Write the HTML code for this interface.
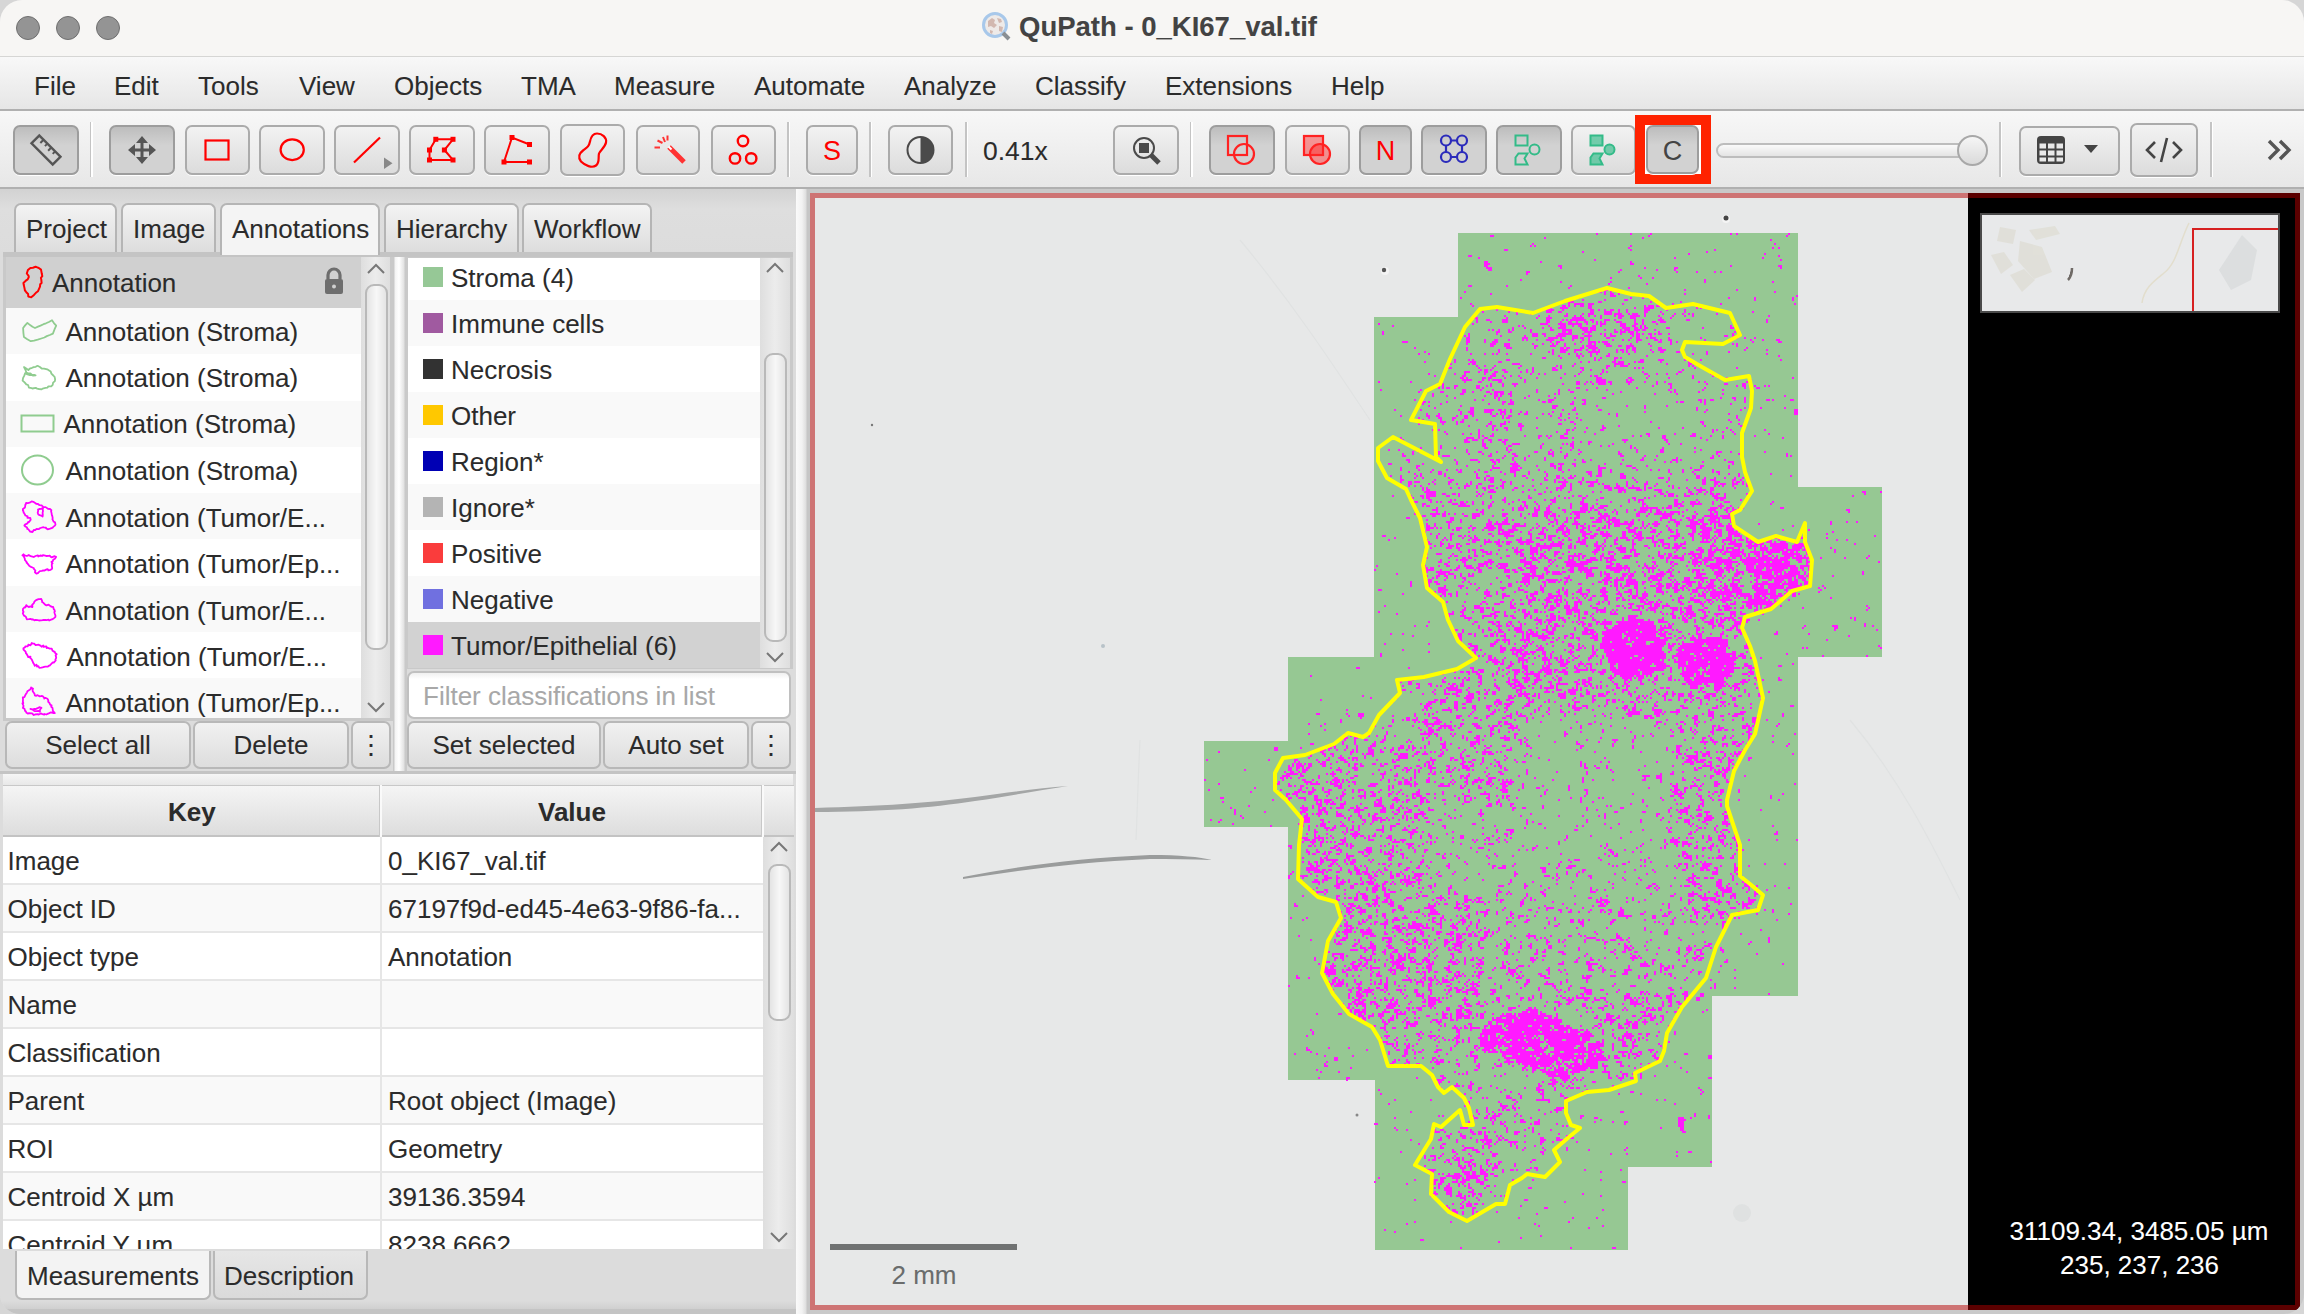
<!DOCTYPE html>
<html><head><meta charset="utf-8">
<style>
*{margin:0;padding:0;box-sizing:border-box}
html,body{width:2304px;height:1314px;overflow:hidden;background:#d6d6d6;font-family:"Liberation Sans",sans-serif;color:#333}
.a{position:absolute}
.t{position:absolute;font-size:26px;line-height:29px;white-space:nowrap;color:#2b2b2b;-webkit-text-stroke:0.08px currentColor}
#win{position:absolute;left:0;top:0;width:2304px;height:1314px;border-radius:22px 22px 20px 20px;overflow:hidden;background:#dcdcdc}
#title{left:0;top:0;width:2304px;height:57px;background:#f7f6f4;border-bottom:1px solid #d6d6d4}
#menu{left:0;top:57px;width:2304px;height:54px;background:linear-gradient(#f8f8f8,#e6e6e6);border-bottom:2px solid #b0b0b0}
#tool{left:0;top:111px;width:2304px;height:78px;background:linear-gradient(#f7f7f7,#e7e7e7);border-bottom:2px solid #b0b0b0}
.tl{width:24px;height:24px;border-radius:50%;background:#949494;border:1px solid #6f6f6f;top:16px}
.btn{position:absolute;top:125px;height:50px;border:2px solid #ababab;border-radius:7px;background:linear-gradient(#f2f2f2,#dcdcdc);box-shadow:0 1px 0 #fff}
.btn.s{background:linear-gradient(#bdbdbd,#d2d2d2 40%,#d2d2d2);border-color:#9d9d9d}
.sep{position:absolute;top:122px;width:3px;height:55px;background:linear-gradient(90deg,#c4c4c4 0,#c4c4c4 1.5px,#fff 1.5px,#fff 3px)}

.tab{position:absolute;top:203px;height:51px;border:2px solid #b5b5b5;border-bottom:none;border-radius:7px 7px 0 0;background:linear-gradient(#f3f3f3,#dcdcdc)}
.tab.sel{background:#f4f4f4;height:52px}
.row{position:absolute;height:47px}
.sq{position:absolute;width:20px;height:20px}
.pbtn{position:absolute;top:721px;height:48px;border:2px solid #b8b8b8;border-radius:7px;background:linear-gradient(#f1f1f1,#dddddd);text-align:center;font-size:26px;line-height:45.5px;color:#2b2b2b;-webkit-text-stroke:0.08px currentColor}
.vsb{position:absolute;background:linear-gradient(90deg,#dedede,#ececec 50%,#dedede)}
.thumb{position:absolute;border:2px solid #b9b9b9;border-radius:9px;background:linear-gradient(90deg,#e4e4e4,#f7f7f7 50%,#e4e4e4)}
.tr{position:absolute;left:0;width:760px;height:48px;border-bottom:2px solid #e6e6e6}
.tr .k{position:absolute;left:4.5px;top:9.5px}
.tr .v{position:absolute;left:385px;top:9.5px}
.btn svg{position:absolute;left:0;top:0}
</style></head><body>
<div id="win">
<!-- title bar -->
<div id="title" class="a">
  <div class="a tl" style="left:16px"></div>
  <div class="a tl" style="left:56px"></div>
  <div class="a tl" style="left:96px"></div>
  <svg class="a" style="left:981px;top:11px" width="32" height="32" viewBox="0 0 32 32">
    <circle cx="14" cy="14" r="11.5" fill="#eeeae8" stroke="#a8c8ea" stroke-width="3"/>
    <path d="M7 10l4-3 3 2-1 3 3 2-3 3-3-2-3 1z M16 7l4 1 1 3-3 1z M18 15l4 1-1 5-3-1z M9 19l3 1-1 3-2-1z" fill="#d2b8b0"/>
    <path d="M22 22l6 6" stroke="#8a8f94" stroke-width="4" stroke-linecap="butt"/>
  </svg>
  <div class="t" style="left:1019px;top:12px;font-size:27.5px;font-weight:bold;color:#434343">QuPath - 0_KI67_val.tif</div>
</div>
<!-- menu bar -->
<div id="menu" class="a">
  <div class="t" style="left:34px;top:14.5px">File</div>
  <div class="t" style="left:114px;top:14.5px">Edit</div>
  <div class="t" style="left:198px;top:14.5px">Tools</div>
  <div class="t" style="left:299px;top:14.5px">View</div>
  <div class="t" style="left:394px;top:14.5px">Objects</div>
  <div class="t" style="left:521px;top:14.5px">TMA</div>
  <div class="t" style="left:614px;top:14.5px">Measure</div>
  <div class="t" style="left:754px;top:14.5px">Automate</div>
  <div class="t" style="left:904px;top:14.5px">Analyze</div>
  <div class="t" style="left:1035px;top:14.5px">Classify</div>
  <div class="t" style="left:1165px;top:14.5px">Extensions</div>
  <div class="t" style="left:1331px;top:14.5px">Help</div>
</div>
<!-- toolbar -->
<div id="tool" class="a"></div>

<!-- toolbar buttons -->
<div class="btn s" style="left:13px;width:66px">
 <svg width="62" height="46" viewBox="0 0 62 46"><g transform="translate(31,23) rotate(45)"><rect x="-15" y="-5.5" width="30" height="11" fill="none" stroke="#555" stroke-width="2.4"/><path d="M-9 -5.5v4.5M-3.5 -5.5v3.5M2 -5.5v4.5M7.5 -5.5v3.5" stroke="#555" stroke-width="2"/></g></svg>
</div>
<div class="sep" style="left:90px"></div>
<div class="btn s" style="left:109px;width:66px">
 <svg width="62" height="46" viewBox="0 0 62 46"><g fill="#555"><rect x="29.5" y="13" width="3" height="20"/><rect x="21" y="21.5" width="20" height="3"/><path d="M31 9l-6 7h12z M31 37l-6-7h12z M17 23l7-6v12z M45 23l-7-6v12z"/></g></svg>
</div>
<div class="btn" style="left:185px;width:65px">
 <svg width="61" height="46" viewBox="0 0 61 46"><rect x="18.5" y="13.5" width="23" height="19" fill="none" stroke="#f00" stroke-width="2.2"/></svg>
</div>
<div class="btn" style="left:259px;width:66px">
 <svg width="62" height="46" viewBox="0 0 62 46"><ellipse cx="31.2" cy="22.7" rx="11.6" ry="10.4" fill="none" stroke="#f00" stroke-width="2.2"/></svg>
</div>
<div class="btn" style="left:334px;width:66px">
 <svg width="62" height="46" viewBox="0 0 62 46"><path d="M18 35.5L44 10.5" stroke="#f00" stroke-width="2.2"/><path d="M48 30.5l8.5 5.7-8.5 5.7z" fill="#888"/></svg>
</div>
<div class="btn" style="left:409px;width:66px">
 <svg width="62" height="46" viewBox="0 0 62 46"><path d="M18.5 33V23l6.3-10.7H42L33.4 23 42 33z" fill="none" stroke="#f00" stroke-width="2"/><g fill="#f00"><rect x="22.3" y="9.8" width="5" height="5"/><rect x="39.5" y="9.8" width="5" height="5"/><rect x="16" y="20.5" width="5" height="5"/><rect x="30.9" y="20.5" width="5" height="5"/><rect x="16" y="30.5" width="5" height="5"/><rect x="39.5" y="30.5" width="5" height="5"/></g></svg>
</div>
<div class="btn" style="left:484px;width:66px">
 <svg width="62" height="46" viewBox="0 0 62 46"><path d="M43.5 17.5L26 10.5 18 35h25.5" fill="none" stroke="#f00" stroke-width="2"/><g fill="#f00"><rect x="23.5" y="8" width="5" height="5"/><rect x="41" y="15" width="5" height="5"/><rect x="15.5" y="32.5" width="5" height="5"/><rect x="41" y="32.5" width="5" height="5"/></g></svg>
</div>
<div class="btn" style="left:560px;width:65px;top:124px;height:52px">
 <svg width="61" height="48" viewBox="0 0 61 48"><path d="M35 7.5c5 0 10 4 9 9-1 5-6 8-7 11-1 4 1 9-3 12-4 3-11 0-15-4-3-4-2-8 2-11 4-3 6-4 7-9 1-5 3-8 7-8z" fill="none" stroke="#f00" stroke-width="2.2"/></svg>
</div>
<div class="btn" style="left:636px;width:64px">
 <svg width="60" height="46" viewBox="0 0 60 46"><g transform="translate(0,3)"><path d="M31 17l15 15" stroke="#f33" stroke-width="5"/><path d="M16.5 17.5h5.5M19.5 10.5l5 2.5M25 7l2 5M29.5 5.5v5" stroke="#f33" stroke-width="2"/><path d="M30.5 16.5l3 3" stroke="#fff" stroke-width="2"/></g></svg>
</div>
<div class="btn" style="left:711px;width:65px">
 <svg width="61" height="46" viewBox="0 0 61 46"><g fill="none" stroke="#f00" stroke-width="2.4"><circle cx="30" cy="14" r="5.2"/><circle cx="22" cy="31.4" r="5.2"/><circle cx="38.2" cy="31.4" r="5.2"/></g></svg>
</div>
<div class="sep" style="left:787px"></div>
<div class="btn" style="left:806px;width:52px">
 <svg width="48" height="46" viewBox="0 0 48 46"><text x="24" y="32.5" text-anchor="middle" font-family="Liberation Sans" font-size="27" fill="#f00">S</text></svg>
</div>
<div class="sep" style="left:869px"></div>
<div class="btn" style="left:888px;width:65px">
 <svg width="61" height="46" viewBox="0 0 61 46"><circle cx="30.5" cy="23" r="13" fill="none" stroke="#4a4a4a" stroke-width="2"/><path d="M30.5 10a13 13 0 0 1 0 26z" fill="#4a4a4a"/></svg>
</div>
<div class="sep" style="left:965px"></div>
<div class="t" style="left:983px;top:137px;font-size:26.5px">0.41x</div>
<div class="btn" style="left:1113px;width:66px">
 <svg width="62" height="46" viewBox="0 0 62 46"><circle cx="29" cy="21" r="10" fill="none" stroke="#4a4a4a" stroke-width="2"/><rect x="24" y="16" width="10" height="10" fill="#4a4a4a"/><path d="M35.5 27.5l8.5 8.5" stroke="#4a4a4a" stroke-width="5"/></svg>
</div>
<div class="sep" style="left:1190px"></div>
<div class="btn s" style="left:1209px;width:66px">
 <svg width="62" height="46" viewBox="0 0 62 46"><rect x="17" y="9" width="19" height="19" fill="none" stroke="#f22" stroke-width="2.2"/><circle cx="33" cy="27" r="10" fill="none" stroke="#f22" stroke-width="2.2"/></svg>
</div>
<div class="btn" style="left:1285px;width:65px">
 <svg width="61" height="46" viewBox="0 0 61 46"><rect x="17" y="9" width="19" height="19" fill="rgba(255,40,40,.45)" stroke="#f22" stroke-width="2.2"/><circle cx="33" cy="27" r="10" fill="rgba(255,40,40,.45)" stroke="#f22" stroke-width="2.2"/></svg>
</div>
<div class="btn s" style="left:1359px;width:53px">
 <svg width="49" height="46" viewBox="0 0 49 46"><text x="24.5" y="33" text-anchor="middle" font-family="Liberation Sans" font-size="27" fill="#f00">N</text></svg>
</div>
<div class="btn s" style="left:1421px;width:66px">
 <svg width="62" height="46" viewBox="0 0 62 46"><g fill="none" stroke="#2b2bbb" stroke-width="2.2"><circle cx="23" cy="13.5" r="5"/><circle cx="39" cy="13.5" r="5"/><circle cx="23" cy="30" r="5"/><circle cx="39" cy="30" r="5"/><path d="M28 13.5h6M28 30h6M23 18.5v6.5M39 18.5v6.5"/></g></svg>
</div>
<div class="btn s" style="left:1496px;width:66px">
 <svg width="62" height="46" viewBox="0 0 62 46"><g fill="none" stroke="#33bb88" stroke-width="2"><rect x="17.5" y="8.5" width="12" height="10"/><circle cx="36.5" cy="22.5" r="5"/><path d="M17.5 37.5v-7l3-4h9l-3 5 3 6z"/></g></svg>
</div>
<div class="btn" style="left:1571px;width:65px">
 <svg width="61" height="46" viewBox="0 0 61 46"><g fill="rgba(51,187,136,.65)" stroke="#33bb88" stroke-width="2"><rect x="17.5" y="8.5" width="12" height="10"/><circle cx="36.5" cy="22.5" r="5"/><path d="M17.5 37.5v-7l3-4h9l-3 5 3 6z"/></g></svg>
</div>
<div class="a" style="left:1635px;top:115px;width:76px;height:69px;border:10px solid #ff2200;background:#fff"></div>
<div class="btn s" style="left:1646px;width:53px;top:125px;height:49px">
 <svg width="49" height="45" viewBox="0 0 49 45"><text x="24.5" y="33" text-anchor="middle" font-family="Liberation Sans" font-size="27" fill="#444">C</text></svg>
</div>
<div class="a" style="left:1716px;top:143px;width:270px;height:15px;border-radius:8px;border:2px solid #bdbdbd;background:linear-gradient(#fafafa,#e4e4e4)"></div>
<div class="a" style="left:1957px;top:135px;width:31px;height:31px;border-radius:50%;border:2px solid #a8a8a8;background:linear-gradient(#f6f6f6,#dadada)"></div>
<div class="sep" style="left:1999px"></div>
<div class="btn" style="left:2019px;width:101px;top:126px;height:50px">
 <svg width="97" height="46" viewBox="0 0 97 46"><rect x="16" y="8" width="28" height="28" rx="4" fill="#444"/><g fill="#e9e9e9"><rect x="18.5" y="15.5" width="6.5" height="5"/><rect x="27" y="15.5" width="6.5" height="5"/><rect x="35.5" y="15.5" width="6.5" height="5"/><rect x="18.5" y="22.5" width="6.5" height="5"/><rect x="27" y="22.5" width="6.5" height="5"/><rect x="35.5" y="22.5" width="6.5" height="5"/><rect x="18.5" y="29.5" width="6.5" height="4"/><rect x="27" y="29.5" width="6.5" height="4"/><rect x="35.5" y="29.5" width="6.5" height="4"/></g><path d="M63 17h14l-7 8z" fill="#444"/></svg>
</div>
<div class="btn" style="left:2130px;width:68px;top:123px;height:54px">
 <svg width="64" height="50" viewBox="0 0 64 50"><path d="M23 17l-8 8 8 8M41 17l8 8-8 8M35 13l-6 24" fill="none" stroke="#444" stroke-width="2.6"/></svg>
</div>
<div class="sep" style="left:2210px"></div>
<svg class="a" style="left:2266px;top:138px" width="30" height="24" viewBox="0 0 30 24"><path d="M3 3l9 9-9 9M14 3l9 9-9 9" fill="none" stroke="#555" stroke-width="3.4"/></svg>


<!-- LEFT PANEL -->
<div class="a" style="left:0;top:189px;width:796px;height:1125px;background:#dcdcdc"></div>
<div class="a" style="left:0;top:189px;width:796px;height:66px;background:linear-gradient(#d2d2d2,#dedede 30%,#dcdcdc)"></div>
<div class="tab" style="left:14px;width:103px"><div class="t" style="left:10px;top:10px">Project</div></div>
<div class="tab" style="left:121px;width:95px"><div class="t" style="left:10px;top:10px">Image</div></div>
<div class="tab" style="left:384px;width:135px"><div class="t" style="left:10px;top:10px">Hierarchy</div></div>
<div class="tab" style="left:522px;width:130px"><div class="t" style="left:10px;top:10px">Workflow</div></div>
<div class="a" style="left:3px;top:252px;width:790px;height:5px;background:#c4c4c4"></div>
<div class="tab sel" style="left:220px;width:160px;border-color:#b5b5b5"><div class="t" style="left:10px;top:10px">Annotations</div></div>
<!-- annotation list -->
<div class="a" style="left:3px;top:257px;width:390px;height:464px;background:#c9c9c9"></div>
<div class="a" style="left:6px;top:257px;width:355px;height:461px;background:#fff;overflow:hidden">
  <div class="row" style="left:0;top:0;width:355px;height:51px;background:#d0d0d0"></div>
  <div class="row" style="left:0;top:51px;width:355px;height:46.3px;background:#f9f9f9"></div>
  <div class="row" style="left:0;top:143.6px;width:355px;height:46.3px;background:#f9f9f9"></div>
  <div class="row" style="left:0;top:236.2px;width:355px;height:46.3px;background:#f9f9f9"></div>
  <div class="row" style="left:0;top:328.8px;width:355px;height:46.3px;background:#f9f9f9"></div>
  <div class="row" style="left:0;top:421.4px;width:355px;height:46.3px;background:#f9f9f9"></div>
</div>
<div class="vsb" style="left:361px;top:257px;width:29px;height:461px"></div>
<svg class="a" style="left:366px;top:262px" width="20" height="14" viewBox="0 0 20 14"><path d="M2 11l8-8 8 8" fill="none" stroke="#777" stroke-width="2"/></svg>
<svg class="a" style="left:366px;top:700px" width="20" height="14" viewBox="0 0 20 14"><path d="M2 3l8 8 8-8" fill="none" stroke="#777" stroke-width="2"/></svg>
<div class="thumb" style="left:365px;top:284px;width:23px;height:366px"></div>
<!-- annotation rows text & icons -->
<svg class="a" style="left:18px;top:262px" width="30" height="42" viewBox="18 262 30 42"><path d="M30.4 267.9 32.9 267.7 35.6 266.8 37.2 267.4 38.8 268.0 41.0 269.6 41.4 271.6 41.7 273.3 42.3 276.2 40.9 277.8 41.3 279.6 41.6 282.9 40.2 284.2 40.0 286.7 38.9 289.1 38.0 291.2 35.9 292.8 34.2 294.7 33.4 295.4 31.2 297.3 30.4 297.1 28.3 296.5 28.1 294.0 26.8 292.8 25.9 291.7 24.9 290.3 24.6 288.6 24.0 285.9 23.8 285.1 23.4 282.9 25.8 280.7 27.7 279.4 28.8 277.0 28.6 275.9 26.8 273.5 27.6 271.0 27.9 270.0z" fill="none" stroke="#f00" stroke-width="2.0" stroke-linejoin="round"/></svg>
<svg class="a" style="left:18px;top:314px" width="42" height="30" viewBox="18 314 42 30"><path d="M23.1 328.0 25.1 325.4 27.4 322.9 30.1 325.1 32.5 326.8 35.0 328.0 38.0 326.7 40.5 325.6 43.5 324.2 46.0 323.3 48.9 322.0 52.0 320.3 53.9 323.1 56.2 325.7 54.4 329.7 52.9 333.6 49.8 335.0 46.8 336.1 44.4 337.5 41.3 338.5 37.7 339.7 34.0 340.6 30.8 341.2 27.3 339.2 23.9 337.0 23.4 332.8z" fill="none" stroke="#8fcc8f" stroke-width="1.8" stroke-linejoin="round"/></svg>
<svg class="a" style="left:18px;top:360px" width="42" height="34" viewBox="18 360 42 34"><path d="M24.0 367.1 28.4 370.1 29.7 368.7 32.1 367.8 33.7 367.1 35.7 366.8 37.5 365.8 39.9 367.0 42.0 368.7 44.1 368.6 47.2 369.3 48.7 370.2 50.7 371.5 51.4 373.6 53.3 375.5 54.6 376.9 55.1 379.3 54.9 381.1 53.1 382.6 52.7 384.8 51.2 386.4 48.4 386.4 47.4 387.6 45.5 387.9 42.6 388.6 41.7 389.3 39.0 389.0 37.1 388.6 35.7 387.8 32.4 388.5 31.6 388.1 28.9 387.6 28.1 385.0 26.3 384.4 24.6 382.4 22.6 380.6 23.1 377.9 24.2 375.9 25.1 373.2 27.5 374.5 29.8 375.1 32.0 375.0 33.1 375.6 35.6 375.3 34.3 374.9 32.0 374.8 30.4 373.3 28.0 373.3 26.4 372.5 25.3 369.5z" fill="none" stroke="#8fcc8f" stroke-width="1.8" stroke-linejoin="round"/></svg>
<svg class="a" style="left:20px;top:414px" width="36" height="20" viewBox="0 0 36 20"><rect x="1.5" y="1.5" width="32" height="16" fill="none" stroke="#8fcc8f" stroke-width="2"/></svg>
<svg class="a" style="left:20px;top:454px" width="36" height="32" viewBox="0 0 36 32"><ellipse cx="17.5" cy="16" rx="15.5" ry="14.5" fill="none" stroke="#8fcc8f" stroke-width="2"/></svg>
<svg class="a" style="left:18px;top:495px" width="42" height="45" viewBox="18 495 42 45"><path d="M22.9 510.5 22.9 508.9 25.0 507.4 25.4 504.4 25.7 504.4 26.1 503.0 27.9 503.1 29.6 502.7 31.6 501.5 31.7 501.3 33.3 501.8 36.3 503.8 36.1 503.8 38.0 504.0 39.5 505.2 41.4 505.3 42.1 505.8 43.3 506.9 45.8 507.2 46.0 507.4 47.9 508.8 50.0 509.0 51.4 510.1 51.1 511.2 51.6 513.4 51.8 515.0 52.2 515.7 52.7 518.1 52.4 519.2 53.6 521.6 55.0 522.3 55.5 524.6 54.9 525.6 53.2 526.9 52.8 527.7 51.6 528.1 50.1 528.6 47.6 529.3 46.0 528.2 46.0 527.6 43.3 527.4 43.4 527.2 40.4 528.0 39.3 528.6 39.0 529.1 38.1 529.2 36.6 528.8 35.2 530.2 33.8 530.0 32.5 532.0 30.0 531.5 29.9 531.3 28.3 529.2 27.2 528.9 27.1 527.5 25.4 526.5 24.4 525.5 24.9 524.6 27.5 523.4 28.1 522.0 29.1 522.0 30.1 520.6 30.7 519.8 30.2 517.8 27.4 517.8 27.6 516.3 25.4 515.5 24.3 513.4 23.7 512.7 23.2 510.7zM38.0 509.6 39.3 509.0 41.2 508.9 43.1 507.9 42.7 509.1 43.0 511.1 42.6 512.7 42.8 514.8 42.6 516.6 41.2 515.6 39.5 515.2 38.2 514.3 37.7 512.8 38.2 510.6z" fill="none" stroke="#f0f" stroke-width="1.8" stroke-linejoin="round"/></svg>
<svg class="a" style="left:18px;top:544px" width="42" height="40" viewBox="18 544 42 40"><path d="M22.4 555.4 23.5 554.3 24.6 555.4 26.9 556.0 28.8 555.0 29.1 555.2 30.6 556.2 33.4 556.8 33.8 557.0 35.5 556.0 37.9 555.3 38.3 556.5 40.3 555.5 42.4 555.9 43.0 555.1 45.2 555.6 46.2 556.0 49.0 555.9 49.7 555.6 50.6 556.8 51.7 557.4 54.6 556.2 56.1 556.9 54.9 558.7 53.2 559.7 52.9 561.0 51.4 562.0 52.6 563.4 51.8 564.0 51.8 566.0 52.2 568.2 51.9 568.9 50.6 569.8 48.3 570.4 47.7 569.2 46.7 569.4 44.2 570.6 43.2 570.4 41.9 570.9 39.9 571.1 38.0 572.8 37.9 573.2 36.4 573.6 34.9 572.3 35.4 570.4 34.1 569.4 33.9 568.3 31.9 567.3 31.0 566.9 29.4 566.0 27.8 563.9 26.5 562.6 27.0 562.5 25.2 560.2 24.9 560.0 24.8 558.7 23.7 556.4 22.6 555.2z" fill="none" stroke="#f0f" stroke-width="1.8" stroke-linejoin="round"/></svg>
<svg class="a" style="left:18px;top:590px" width="42" height="40" viewBox="18 590 42 40"><path d="M22.9 610.7 23.0 608.8 24.7 607.1 25.4 607.4 26.3 605.1 27.1 605.9 28.8 607.1 30.4 606.3 32.3 607.1 32.5 606.2 32.1 604.9 33.9 603.1 34.3 601.8 35.0 601.0 36.1 600.1 38.5 599.1 39.6 599.2 41.3 599.0 42.2 601.2 42.0 602.0 43.4 602.8 45.4 604.9 46.5 605.4 48.6 604.7 50.4 606.1 52.0 606.9 53.1 606.8 53.8 609.3 54.5 609.9 54.9 611.4 54.3 612.1 54.8 613.8 55.5 615.8 55.3 617.1 53.7 618.4 52.3 619.3 51.7 619.4 49.2 620.5 48.7 619.7 46.6 620.2 45.5 619.8 43.0 620.0 42.9 620.1 40.9 620.4 39.0 620.5 37.8 620.2 35.7 619.9 34.4 620.3 32.7 619.2 31.9 619.7 30.9 618.8 28.8 619.2 26.8 619.3 25.9 616.9 25.0 616.1 24.0 615.6 22.8 613.3 23.6 611.9z" fill="none" stroke="#f0f" stroke-width="1.8" stroke-linejoin="round"/></svg>
<svg class="a" style="left:18px;top:638px" width="42" height="40" viewBox="18 638 42 40"><path d="M23.4 648.2 25.1 647.2 25.3 646.4 27.8 646.3 28.4 644.6 30.5 645.4 31.8 643.0 32.4 643.5 34.2 643.7 35.6 645.2 38.7 644.7 40.4 645.6 41.6 646.7 43.3 645.5 43.7 646.9 46.3 646.4 46.7 648.1 47.8 647.7 49.7 648.6 51.8 648.7 52.5 650.7 53.7 651.4 54.9 652.1 55.0 652.9 56.7 654.3 55.6 655.2 56.2 657.4 56.0 658.4 55.4 659.4 55.7 660.5 53.8 662.7 52.8 662.4 50.6 664.6 49.9 665.6 48.9 665.7 47.6 666.7 45.2 666.6 43.3 667.1 43.5 667.1 41.4 667.7 39.3 667.9 38.4 666.2 37.0 666.5 36.5 664.7 34.7 665.7 33.8 663.7 33.2 662.9 32.7 661.6 31.7 659.3 30.2 657.9 30.5 656.7 28.2 657.0 27.6 655.7 26.5 653.8 25.9 653.3 25.7 651.9 25.1 651.2 23.5 649.6z" fill="none" stroke="#f0f" stroke-width="1.8" stroke-linejoin="round"/></svg>
<svg class="a" style="left:18px;top:684px" width="42" height="40" viewBox="18 684 42 40"><path d="M22.8 697.5 24.4 697.2 25.2 695.3 25.6 694.6 26.8 692.7 27.0 692.3 27.4 691.2 29.7 689.8 30.7 689.0 31.1 687.4 33.1 688.7 32.6 689.7 32.7 691.2 34.5 693.7 34.9 695.5 36.0 695.8 37.5 695.2 39.8 696.4 41.4 696.0 42.6 696.2 44.3 697.9 44.2 698.6 45.3 697.8 47.4 698.8 48.3 700.2 48.2 701.8 49.3 702.7 50.2 704.7 51.6 705.4 51.2 706.8 52.5 707.9 52.9 710.9 54.8 713.0 53.7 713.2 51.0 712.3 49.3 713.1 48.1 713.6 46.3 714.5 44.6 714.0 44.2 714.7 41.7 713.8 41.1 713.5 38.4 714.6 37.6 714.1 35.2 714.3 34.9 714.6 33.7 715.0 32.1 713.4 29.1 713.2 28.0 713.6 26.5 712.8 25.7 711.2 25.1 711.0 24.5 708.8 22.9 707.9 23.1 707.2 23.6 706.0 22.4 703.3 23.3 703.1 22.9 701.7 23.0 699.2zM30.4 709.0 32.4 709.7 34.3 708.8 35.5 709.1 37.1 708.4 38.2 707.9 39.4 707.2 41.5 707.8 40.7 708.7 39.9 710.2 39.9 711.8 38.6 711.0 36.4 711.1 35.0 711.1 34.1 710.8 32.4 709.4z" fill="none" stroke="#f0f" stroke-width="1.8" stroke-linejoin="round"/></svg>
<svg class="a" style="left:320px;top:267px" width="28" height="30" viewBox="0 0 28 30"><path d="M8 12V8a6 6 0 0 1 12 0v4" fill="none" stroke="#6e6e6e" stroke-width="3.2"/><rect x="5" y="12" width="18" height="15" rx="2" fill="#6e6e6e"/><circle cx="14" cy="19.5" r="2" fill="#d0d0d0"/></svg>
<div class="t" style="left:52px;top:269px">Annotation</div>
<div class="t" style="left:65.5px;top:317.5px">Annotation (Stroma)</div>
<div class="t" style="left:65.5px;top:363.5px">Annotation (Stroma)</div>
<div class="t" style="left:63.5px;top:409.5px">Annotation (Stroma)</div>
<div class="t" style="left:65.5px;top:456.5px">Annotation (Stroma)</div>
<div class="t" style="left:65.5px;top:503.5px">Annotation (Tumor/E...</div>
<div class="t" style="left:65.5px;top:549.5px">Annotation (Tumor/Ep...</div>
<div class="t" style="left:65.5px;top:596.5px">Annotation (Tumor/E...</div>
<div class="t" style="left:66.5px;top:642.5px">Annotation (Tumor/E...</div>
<div class="t" style="left:65.5px;top:688.5px">Annotation (Tumor/Ep...</div>
<!-- divider -->
<div class="a" style="left:393px;top:257px;width:14px;height:516px;background:linear-gradient(90deg,#c9c9c9 0,#c9c9c9 1px,#f3f3f3 2px,#fff 6px,#e2e2e2 11px,#c9c9c9 12px)"></div>
<!-- class list -->
<div class="a" style="left:407px;top:257px;width:386px;height:412px;background:#c9c9c9"></div>
<div class="a" style="left:408px;top:258px;width:352px;height:410px;background:#fff;overflow:hidden">
  <div class="row" style="left:0;top:42px;width:352px;height:46px;background:#f9f9f9"></div>
  <div class="row" style="left:0;top:134px;width:352px;height:46px;background:#f9f9f9"></div>
  <div class="row" style="left:0;top:226px;width:352px;height:46px;background:#f9f9f9"></div>
  <div class="row" style="left:0;top:318px;width:352px;height:46px;background:#f9f9f9"></div>
  <div class="row" style="left:0;top:364px;width:352px;height:46px;background:#d2d2d2"></div>
</div>
<div class="vsb" style="left:760px;top:258px;width:30px;height:410px"></div>
<svg class="a" style="left:765px;top:261px" width="20" height="14" viewBox="0 0 20 14"><path d="M2 11l8-8 8 8" fill="none" stroke="#777" stroke-width="2"/></svg>
<svg class="a" style="left:765px;top:650px" width="20" height="14" viewBox="0 0 20 14"><path d="M2 3l8 8 8-8" fill="none" stroke="#777" stroke-width="2"/></svg>
<div class="thumb" style="left:764px;top:353px;width:23px;height:289px"></div>
<div class="sq" style="left:423px;top:267px;background:#96c896"></div><div class="t" style="left:451px;top:263.5px">Stroma (4)</div>
<div class="sq" style="left:423px;top:313px;background:#a05aa0"></div><div class="t" style="left:451px;top:309.5px">Immune cells</div>
<div class="sq" style="left:423px;top:359px;background:#323232"></div><div class="t" style="left:451px;top:355.5px">Necrosis</div>
<div class="sq" style="left:423px;top:405px;background:#ffc800"></div><div class="t" style="left:451px;top:401.5px">Other</div>
<div class="sq" style="left:423px;top:451px;background:#0000b4"></div><div class="t" style="left:451px;top:447.5px">Region*</div>
<div class="sq" style="left:423px;top:497px;background:#b4b4b4"></div><div class="t" style="left:451px;top:493.5px">Ignore*</div>
<div class="sq" style="left:423px;top:543px;background:#fa3c3c"></div><div class="t" style="left:451px;top:539.5px">Positive</div>
<div class="sq" style="left:423px;top:589px;background:#7070e0"></div><div class="t" style="left:451px;top:585.5px">Negative</div>
<div class="sq" style="left:423px;top:635px;background:#ff1aff"></div><div class="t" style="left:451px;top:631.5px">Tumor/Epithelial (6)</div>
<!-- filter field -->
<div class="a" style="left:407px;top:671px;width:384px;height:48px;border:2px solid #c0c0c0;border-radius:7px;background:linear-gradient(#f0f0f0,#fff 6px)"></div>
<div class="t" style="left:423px;top:682px;color:#a8a8a8">Filter classifications in list</div>
<!-- buttons -->
<div class="pbtn" style="left:5px;width:186px">Select all</div>
<div class="pbtn" style="left:193px;width:156px">Delete</div>
<div class="pbtn" style="left:351px;width:40px">&#8942;</div>
<div class="pbtn" style="left:407px;width:194px">Set selected</div>
<div class="pbtn" style="left:603px;width:146px">Auto set</div>
<div class="pbtn" style="left:751px;width:40px">&#8942;</div>
<div class="a" style="left:0;top:771px;width:796px;height:3px;background:#c4c4c4"></div>
<div class="a" style="left:3px;top:774px;width:790px;height:11px;background:linear-gradient(#f6f6f6,#e8e8e8)"></div>
<!-- table -->
<div class="a" style="left:3px;top:785px;width:791px;height:464px;background:#fff;overflow:hidden">
  <div class="a" style="left:0;top:0;width:791px;height:52px;background:linear-gradient(#f5f5f5,#dddddd);border-top:1px solid #c8c8c8;border-bottom:2px solid #c3c3c3"></div>
  <div class="a" style="left:376px;top:0;width:3px;height:52px;background:linear-gradient(90deg,#c8c8c8 1px,#fafafa 1px)"></div>
  <div class="a" style="left:758px;top:0;width:3px;height:52px;background:linear-gradient(90deg,#c8c8c8 1px,#fafafa 1px)"></div>
  <div class="t" style="left:165px;top:12.5px;font-weight:bold">Key</div>
  <div class="t" style="left:535px;top:12.5px;font-weight:bold">Value</div>
  <div class="tr" style="top:52px;background:#fff"><div class="t k">Image</div><div class="t v">0_KI67_val.tif</div></div>
  <div class="tr" style="top:100px;background:#f9f9f9"><div class="t k">Object ID</div><div class="t v">67197f9d-ed45-4e63-9f86-fa...</div></div>
  <div class="tr" style="top:148px;background:#fff"><div class="t k">Object type</div><div class="t v">Annotation</div></div>
  <div class="tr" style="top:196px;background:#f9f9f9"><div class="t k">Name</div><div class="t v"></div></div>
  <div class="tr" style="top:244px;background:#fff"><div class="t k">Classification</div><div class="t v"></div></div>
  <div class="tr" style="top:292px;background:#f9f9f9"><div class="t k">Parent</div><div class="t v">Root object (Image)</div></div>
  <div class="tr" style="top:340px;background:#fff"><div class="t k">ROI</div><div class="t v">Geometry</div></div>
  <div class="tr" style="top:388px;background:#f9f9f9"><div class="t k">Centroid X &#181;m</div><div class="t v">39136.3594</div></div>
  <div class="tr" style="top:436px;background:#fff"><div class="t k">Centroid Y &#181;m</div><div class="t v">8238.6662</div></div>
  <div class="a" style="left:377px;top:52px;width:2px;height:420px;background:#e6e6e6"></div>
  <div class="vsb" style="left:760px;top:52px;width:31px;height:420px"></div>
</div>
<svg class="a" style="left:769px;top:840px" width="20" height="14" viewBox="0 0 20 14"><path d="M2 11l8-8 8 8" fill="none" stroke="#777" stroke-width="2"/></svg>
<svg class="a" style="left:769px;top:1230px" width="20" height="14" viewBox="0 0 20 14"><path d="M2 3l8 8 8-8" fill="none" stroke="#777" stroke-width="2"/></svg>
<div class="thumb" style="left:768px;top:864px;width:23px;height:157px"></div>
<!-- bottom tabs -->
<div class="a" style="left:0;top:1249px;width:796px;height:65px;background:linear-gradient(#dcdcdc 80%,#d0d0d0 92%,#c4c4c4 92%)"></div>
<div class="a" style="left:15px;top:1251px;width:196px;height:49px;border:2px solid #b8b8b8;border-top:none;border-radius:0 0 7px 7px;background:#f3f3f3"><div class="t" style="left:10px;top:11px">Measurements</div></div>
<div class="a" style="left:213px;top:1251px;width:155px;height:49px;border:2px solid #b8b8b8;border-top:none;border-radius:0 0 7px 7px;background:linear-gradient(#e6e6e6,#dadada)"><div class="t" style="left:9px;top:11px">Description</div></div>
<div class="a" style="left:796px;top:189px;width:14px;height:1125px;background:linear-gradient(90deg,#fafafa,#f2f2f2 6px,#dedede 10px,#c6c6c6 11px)"></div>


<!-- VIEWER -->
<div class="a" style="left:810px;top:189px;width:1494px;height:1125px;background:#c9c9c9"></div>
<div class="a" style="left:810px;top:193px;width:1158px;height:1117px;background:#e7e8e8"></div>
<svg class="a" style="left:815px;top:198px" width="1153" height="1106" viewBox="815 198 1153 1106">
 <g fill="#9a9c9c">
  <path d="M815 808 C880 806 930 803 975 797 C1010 792 1040 788 1068 786 C1040 790 1010 796 975 801 C930 808 880 812 815 812z" fill="#a4a6a6"/>
  <path d="M963 877 C1020 866 1080 858 1150 855 C1180 855 1200 857 1212 860 C1190 859 1170 859 1150 859 C1080 862 1020 870 963 879z"/>
 </g>
 <g fill="none" stroke="#e0e2e2" stroke-width="1.2">
  <path d="M1140 740 C1138 780 1137 820 1136 840"/>
  <path d="M1240 240 C1290 300 1330 360 1370 420"/>
  <path d="M1850 720 C1900 780 1930 840 1960 900"/>
 </g>
 <g>
  <circle cx="1385" cy="271" r="4" fill="#f4f4f4"/><circle cx="1384" cy="270" r="2.2" fill="#555"/>
  <circle cx="1726" cy="219" r="4" fill="#f4f4f4"/><circle cx="1726" cy="218" r="2.5" fill="#444"/>
  <circle cx="872" cy="425" r="1.2" fill="#777"/><circle cx="1103" cy="646" r="2" fill="#b8c2c8"/>
  <circle cx="1357" cy="1115" r="1.5" fill="#888"/><circle cx="1742" cy="1213" r="9" fill="#dfe1e1"/>
 </g>
</svg>
<svg class="a" style="left:0;top:0" width="2304" height="1314" viewBox="0 0 2304 1314">
<polygon points="1458,233 1798,233 1798,487 1882,487 1882,657 1798,657 1798,996 1712,996 1712,1167 1628,1167 1628,1250 1375,1250 1375,1080 1288,1080 1288,827 1204,827 1204,741 1288,741 1288,657 1374,657 1374,317 1458,317" fill="#96c893"/>
<path d="M1596 234h2m32 0h2m18 0h2m78 0h2m4 0h2m50 0h2m-300 2h4m154 0h2m136 0h2m-244 2h2m96 0h2m126 2h2m-240 4h2m240 0h2m-246 2h2m2 0h2m94 0h2m-4 2h2m142 0h2m4 0h2m-276 2h4m122 0h2m82 0h2m-134 2h2m122 0h2m-20 2h2m74 0h2m-298 2h4m306 0h2m-302 2h2m194 0h2m86 0h2m-170 2h2m184 0h2m-298 2h4m52 0h2m88 0h2m-148 2h6m140 0h4m-150 2h4m70 0h4m168 0h2m46 0h4m-296 2h6m68 0h2m82 0h2m28 0h4m102 0h2m-294 2h4m128 0h2m34 0h2m16 0h2m-150 2h4m88 0h2m56 0h2m18 0h2m16 0h2m4 0h2m-196 2h2m110 2h2m-30 2h2m28 0h2m10 0h2m-134 2h2m182 0h2m-146 2h2m48 0h2m92 0h2m66 0h2m-166 2h2m36 0h2m-180 2h4m34 0h2m62 0h2m-4 2h2m58 0h2m-26 2h4m76 0h2m50 0h2m-274 2h2m132 0h4m2 0h2m4 0h2m162 0h2m-286 2h2m112 0h2m4 0h4m4 0h2m64 0h2m-76 2h6m22 0h4m2 0h4m148 0h2m-338 2h2m116 0h2m50 0h2m10 0h2m84 0h2m24 0h2m36 0h2m-226 2h4m10 0h2m20 0h2m18 0h4m126 0h2m36 0h2m-226 2h6m24 0h4m48 0h2m4 0h2m22 0h2m-212 2h2m84 0h4m8 0h2m4 0h10m4 0h6m28 0h2m48 0h2m46 0h2m72 0h2m-324 2h2m88 0h4m2 0h2m4 0h2m4 0h4m4 0h4m52 0h2m2 0h6m2 0h4m40 0h2m-204 2h2m46 0h6m8 0h8m20 0h4m42 0h2m8 0h10m42 0h2m2 0h2m-206 2h2m12 0h2m34 0h8m8 0h2m26 0h4m4 0h2m4 0h2m4 0h4m4 0h2m6 0h2m16 0h6m16 0h2m16 0h2m-204 2h2m24 0h2m6 0h2m28 0h6m6 0h4m28 0h4m10 0h8m6 0h2m6 0h2m16 0h4m12 0h2m22 0h2m66 0h2m-238 2h2m12 0h2m34 0h2m14 0h2m4 0h6m10 0h8m2 0h8m6 0h2m2 0h6m6 0h2m16 0h2m10 0h2m6 0h2m4 0h2m2 0h2m22 0h2m-214 2h2m32 0h2m8 0h2m14 0h4m6 0h2m4 0h2m6 0h2m4 0h2m4 0h2m12 0h2m2 0h6m6 0h10m4 0h2m12 0h2m12 0h2m10 0h2m6 0h2m74 0h2m-296 2h4m28 0h2m28 0h2m8 0h6m20 0h12m16 0h2m16 0h4m8 0h6m24 0h2m8 0h2m-196 2h2m8 0h4m12 0h6m38 0h4m12 0h2m2 0h2m2 0h16m4 0h4m10 0h6m4 0h2m18 0h2m6 0h2m14 0h6m22 0h4m76 0h2m-292 2h2m12 0h2m10 0h6m38 0h4m10 0h2m6 0h4m4 0h2m6 0h4m4 0h2m2 0h2m2 0h2m2 0h2m10 0h6m12 0h2m6 0h2m8 0h4m4 0h6m100 0h2m-390 2h2m92 0h2m66 0h8m10 0h8m2 0h14m4 0h2m8 0h2m2 0h6m14 0h6m8 0h4m4 0h2m12 0h2m-266 2h2m124 0h2m2 0h2m24 0h2m10 0h6m6 0h2m4 0h4m10 0h4m4 0h2m18 0h6m6 0h4m4 0h2m2 0h2m84 0h2m-220 2h2m10 0h2m16 0h2m6 0h2m6 0h8m14 0h8m2 0h6m26 0h8m4 0h4m2 0h2m2 0h4m18 0h4m32 0h2m26 0h4m-246 2h2m2 0h2m4 0h2m8 0h2m2 0h2m16 0h2m18 0h4m8 0h10m10 0h6m2 0h6m8 0h2m8 0h2m4 0h2m2 0h6m4 0h6m2 0h4m8 0h2m-274 2h2m112 0h4m8 0h4m18 0h2m30 0h4m2 0h4m12 0h8m22 0h4m2 0h6m2 0h6m2 0h2m20 0h2m74 0h2m-354 2h2m84 0h2m26 0h2m34 0h6m4 0h4m12 0h14m10 0h2m4 0h2m10 0h2m2 0h2m4 0h2m8 0h2m8 0h4m2 0h4m2 0h2m4 0h4m2 0h2m2 0h4m6 0h2m62 0h2m-270 2h2m2 0h2m30 0h2m22 0h2m6 0h6m6 0h2m10 0h10m6 0h6m6 0h8m12 0h2m4 0h6m16 0h2m2 0h4m10 0h2m72 0h4m4 0h6m-272 2h4m52 0h6m20 0h10m2 0h2m10 0h6m2 0h4m4 0h2m16 0h4m20 0h2m4 0h4m6 0h2m2 0h6m12 0h2m30 0h2m34 0h2m6 0h2m8 0h2m-298 2h2m6 0h4m14 0h2m8 0h4m10 0h2m12 0h2m2 0h2m8 0h2m8 0h8m6 0h4m8 0h2m8 0h2m4 0h2m22 0h2m8 0h2m4 0h2m6 0h6m12 0h4m2 0h2m6 0h4m32 0h2m44 0h2m10 0h2m12 0h4m-378 2h6m50 0h2m6 0h4m14 0h2m6 0h6m52 0h2m4 0h4m20 0h2m6 0h8m2 0h2m2 0h6m28 0h2m20 0h4m8 0h2m4 0h2m16 0h2m56 0h2m24 0h4m-316 2h2m22 0h6m8 0h6m22 0h2m8 0h2m8 0h2m2 0h2m6 0h2m8 0h2m12 0h4m2 0h2m8 0h6m20 0h2m16 0h2m20 0h2m44 0h2m14 0h2m2 0h2m-248 2h4m10 0h6m24 0h4m12 0h6m8 0h2m16 0h2m2 0h10m10 0h6m6 0h4m4 0h8m16 0h2m84 0h2m-324 2h2m50 0h2m38 0h6m22 0h2m24 0h4m2 0h4m10 0h4m4 0h10m28 0h4m2 0h4m22 0h4m84 0h2m-282 2h2m30 0h2m52 0h2m6 0h8m6 0h8m4 0h2m4 0h4m2 0h2m16 0h2m2 0h4m2 0h2m4 0h4m14 0h2m6 0h8m78 0h2m20 0h2m-344 2h2m72 0h2m48 0h2m2 0h2m6 0h6m8 0h2m12 0h12m16 0h2m4 0h2m2 0h2m6 0h2m16 0h2m6 0h4m12 0h4m26 0h2m20 0h2m-312 2h2m8 0h2m40 0h2m12 0h2m6 0h2m2 0h2m8 0h2m22 0h2m20 0h2m14 0h2m6 0h2m2 0h2m8 0h2m4 0h2m10 0h2m18 0h2m62 0h2m12 0h2m58 0h2m-210 2h2m16 0h4m2 0h2m6 0h2m14 0h4m36 0h2m130 0h2m-238 2h4m14 0h2m16 0h2m14 0h2m4 0h2m12 0h4m2 0h2m64 0h2m-234 2h2m12 0h2m2 0h2m32 0h4m84 0h2m2 0h2m14 0h2m24 0h4m14 0h6m20 0h2m2 0h2m10 0h2m78 0h2m-358 2h2m22 0h2m4 0h2m14 0h6m22 0h4m78 0h2m6 0h2m22 0h4m2 0h6m10 0h2m2 0h6m16 0h2m26 0h2m-242 2h4m16 0h2m2 0h4m36 0h8m54 0h2m38 0h10m4 0h2m36 0h2m20 0h4m-216 2h2m6 0h2m8 0h2m24 0h2m34 0h2m2 0h2m10 0h2m32 0h4m4 0h2m4 0h8m60 0h2m2 0h2m-246 2h4m26 0h2m12 0h2m24 0h2m12 0h2m18 0h4m4 0h2m18 0h4m22 0h2m26 0h2m2 0h2m2 0h2m50 0h2m40 0h2m-258 2h2m2 0h4m2 0h2m10 0h4m20 0h2m4 0h2m18 0h6m24 0h2m6 0h2m10 0h2m78 0h2m-220 2h6m8 0h2m4 0h4m6 0h4m6 0h4m12 0h2m4 0h2m4 0h2m46 0h2m20 0h2m2 0h2m34 0h2m34 0h4m28 0h2m-284 2h2m24 0h2m8 0h2m18 0h2m6 0h4m34 0h2m6 0h2m4 0h2m18 0h2m12 0h2m20 0h2m42 0h4m8 0h2m8 0h2m8 0h2m32 0h2m-278 2h2m26 0h4m24 0h6m6 0h2m6 0h2m6 0h2m54 0h2m14 0h2m2 0h4m50 0h2m42 0h2m18 0h2m-254 2h4m2 0h2m14 0h4m2 0h4m12 0h2m14 0h2m14 0h2m22 0h2m34 0h6m26 0h4m14 0h2m20 0h2m22 0h2m24 0h6m2 0h2m20 0h2m42 0h2m-332 2h10m10 0h2m4 0h2m2 0h10m22 0h2m70 0h10m20 0h2m2 0h4m90 0h4m20 0h4m-374 2h2m30 0h2m52 0h2m12 0h4m16 0h4m22 0h2m50 0h4m6 0h2m2 0h2m4 0h10m2 0h4m14 0h6m12 0h2m10 0h2m6 0h2m32 0h2m4 0h2m40 0h4m-308 2h2m46 0h2m10 0h2m8 0h6m44 0h2m12 0h4m4 0h2m6 0h2m4 0h8m4 0h2m16 0h2m26 0h2m10 0h4m34 0h2m16 0h4m14 0h4m-310 2h4m2 0h2m10 0h4m18 0h4m6 0h2m2 0h2m10 0h2m10 0h2m136 0h2m16 0h2m64 0h2m4 0h4m8 0h2m8 0h2m2 0h2m-332 2h2m2 0h2m2 0h4m4 0h2m20 0h4m2 0h2m92 0h4m16 0h2m38 0h2m32 0h2m32 0h2m38 0h2m10 0h4m-380 2h2m38 0h2m40 0h4m14 0h2m10 0h2m42 0h2m20 0h2m8 0h2m16 0h2m18 0h2m60 0h2m4 0h2m26 0h2m18 0h2m-306 2h2m20 0h4m18 0h4m6 0h2m12 0h4m4 0h10m6 0h2m24 0h2m20 0h2m10 0h4m46 0h2m48 0h2m2 0h2m22 0h2m-268 2h2m26 0h4m26 0h2m2 0h4m2 0h4m4 0h4m42 0h2m2 0h2m52 0h2m40 0h2m20 0h2m44 0h2m-292 2h2m12 0h2m36 0h2m8 0h4m2 0h2m8 0h2m16 0h2m18 0h2m234 0h2m-332 2h2m38 0h2m2 0h2m24 0h2m28 0h2m18 0h2m26 0h4m114 0h2m10 0h4m8 0h2m-332 2h2m58 0h2m6 0h2m14 0h2m10 0h2m26 0h2m8 0h6m28 0h4m112 0h4m2 0h2m4 0h4m20 0h2m8 0h2m20 0h4m2 0h2m16 0h4m-372 2h4m2 0h2m16 0h2m54 0h4m4 0h4m28 0h4m2 0h4m20 0h2m10 0h2m90 0h2m2 0h4m16 0h2m2 0h2m38 0h2m-324 2h2m16 0h2m46 0h2m12 0h2m4 0h6m56 0h4m8 0h4m118 0h2m24 0h2m-304 2h2m30 0h2m90 0h6m38 0h2m28 0h2m16 0h2m20 0h2m82 0h2m-318 2h2m34 0h4m78 0h4m18 0h2m68 0h2m50 0h2m46 0h2m14 0h2m22 0h2m-392 2h2m18 0h2m4 0h2m36 0h2m10 0h4m10 0h10m4 0h4m2 0h2m4 0h2m50 0h2m8 0h4m22 0h4m94 0h2m8 0h2m32 0h2m52 0h4m-338 2h2m6 0h6m10 0h8m8 0h6m4 0h2m8 0h2m4 0h2m24 0h2m90 0h2m58 0h2m88 0h4m-372 2h2m10 0h2m20 0h2m8 0h4m16 0h2m4 0h2m2 0h2m2 0h2m12 0h2m4 0h4m14 0h2m4 0h2m10 0h2m6 0h2m6 0h2m30 0h2m6 0h2m110 0h2m18 0h2m44 0h4m-398 2h2m24 0h4m6 0h4m16 0h2m6 0h4m4 0h2m18 0h4m6 0h2m4 0h4m38 0h2m8 0h2m54 0h2m118 0h2m-320 2h2m8 0h2m8 0h4m10 0h4m8 0h4m34 0h2m2 0h4m26 0h2m20 0h2m8 0h2m6 0h2m158 0h2m-316 2h2m16 0h2m10 0h2m8 0h2m12 0h2m82 0h2m2 0h2m14 0h2m146 0h2m8 0h2m-318 2h2m16 0h6m10 0h2m2 0h4m26 0h2m12 0h2m2 0h2m60 0h4m76 0h2m48 0h4m26 0h2m-314 2h2m22 0h2m12 0h2m30 0h4m8 0h6m12 0h4m36 0h4m12 0h2m126 0h2m34 0h2m-272 2h2m16 0h2m4 0h4m4 0h2m16 0h6m78 0h2m14 0h2m84 0h2m34 0h6m-312 2h2m56 0h2m10 0h4m12 0h2m14 0h2m36 0h2m10 0h2m14 0h4m52 0h2m22 0h2m42 0h2m-296 2h2m4 0h2m38 0h2m12 0h2m2 0h2m8 0h2m12 0h2m44 0h4m2 0h2m26 0h4m108 0h2m2 0h2m12 0h2m32 0h2m-322 2h2m32 0h2m76 0h2m8 0h2m16 0h2m126 0h2m8 0h2m8 0h2m-288 2h2m14 0h2m6 0h2m6 0h2m12 0h2m70 0h4m26 0h2m50 0h4m24 0h2m16 0h4m38 0h2m32 0h2m-336 2h2m42 0h2m2 0h2m6 0h4m30 0h2m12 0h4m4 0h2m2 0h2m8 0h4m68 0h2m6 0h2m6 0h2m12 0h4m24 0h6m14 0h2m10 0h2m30 0h2m-366 2h4m6 0h2m64 0h8m4 0h2m4 0h4m50 0h2m8 0h2m10 0h8m4 0h2m88 0h4m34 0h2m20 0h2m58 0h2m-382 2h2m60 0h4m4 0h6m4 0h2m4 0h4m6 0h4m2 0h4m114 0h6m36 0h4m38 0h2m-244 2h6m12 0h2m6 0h2m10 0h4m66 0h2m6 0h2m6 0h4m32 0h2m40 0h2m-186 2h4m18 0h2m6 0h8m22 0h2m18 0h2m2 0h2m2 0h4m14 0h2m22 0h2m54 0h2m10 0h2m-274 2h2m30 0h2m40 0h4m22 0h4m28 0h2m28 0h4m26 0h2m6 0h2m20 0h2m-212 2h2m18 0h2m12 0h2m28 0h4m18 0h2m32 0h2m18 0h2m10 0h2m56 0h2m2 0h2m26 0h2m30 0h2m-308 2h2m8 0h2m14 0h6m46 0h2m38 0h2m2 0h2m38 0h2m18 0h2m6 0h2m56 0h2m22 0h4m36 0h2m-290 2h2m4 0h2m18 0h2m26 0h2m10 0h4m14 0h2m10 0h2m24 0h4m10 0h2m2 0h2m6 0h2m18 0h2m36 0h2m16 0h2m22 0h4m30 0h2m20 0h6m8 0h2m32 0h2m-364 2h2m8 0h2m10 0h2m12 0h2m28 0h2m12 0h2m6 0h2m20 0h4m32 0h6m12 0h2m10 0h2m38 0h4m94 0h2m20 0h2m46 0h2m-386 2h4m36 0h8m38 0h4m12 0h2m8 0h4m10 0h2m22 0h2m10 0h4m52 0h4m20 0h2m10 0h2m54 0h2m4 0h2m66 0h2m2 0h2m-290 2h2m8 0h2m10 0h2m18 0h2m18 0h2m76 0h2m32 0h2m32 0h4m-308 2h4m44 0h2m14 0h8m12 0h4m2 0h4m12 0h2m10 0h2m18 0h2m28 0h2m6 0h2m6 0h2m30 0h2m16 0h4m10 0h2m16 0h6m2 0h2m42 0h2m-348 2h2m28 0h2m46 0h2m20 0h2m12 0h4m2 0h2m14 0h2m66 0h4m78 0h2m4 0h2m4 0h2m24 0h2m24 0h6m-346 2h4m30 0h2m32 0h2m36 0h2m14 0h8m32 0h4m4 0h6m8 0h4m28 0h2m14 0h2m110 0h2m-318 2h4m46 0h2m24 0h2m18 0h8m16 0h2m12 0h6m4 0h2m12 0h2m22 0h2m26 0h6m14 0h2m52 0h4m24 0h2m-330 2h2m14 0h2m74 0h8m10 0h8m2 0h2m32 0h2m2 0h4m36 0h8m26 0h4m54 0h2m8 0h2m26 0h2m-330 2h2m16 0h2m12 0h2m12 0h2m8 0h2m2 0h2m16 0h2m10 0h2m18 0h10m18 0h2m18 0h4m6 0h2m28 0h4m8 0h2m24 0h2m12 0h2m6 0h2m8 0h2m12 0h2m10 0h6m12 0h2m-306 2h2m20 0h2m6 0h4m16 0h4m12 0h2m8 0h4m12 0h2m8 0h6m12 0h2m14 0h2m16 0h2m22 0h6m6 0h4m8 0h2m56 0h2m12 0h2m8 0h2m18 0h2m2 0h4m-306 2h2m4 0h2m16 0h4m2 0h2m30 0h2m26 0h2m8 0h2m12 0h2m16 0h2m40 0h4m6 0h4m18 0h4m46 0h2m22 0h2m22 0h2m8 0h2m8 0h2m30 0h2m-382 2h2m8 0h2m14 0h2m2 0h2m22 0h2m30 0h2m8 0h4m24 0h2m6 0h4m20 0h2m8 0h4m10 0h2m2 0h2m14 0h2m4 0h6m18 0h6m70 0h4m38 0h2m50 0h2m-392 2h2m12 0h2m6 0h2m24 0h2m26 0h4m4 0h2m4 0h4m32 0h2m16 0h2m10 0h4m2 0h2m4 0h6m8 0h2m36 0h6m6 0h2m24 0h6m4 0h2m26 0h4m4 0h2m8 0h2m8 0h2m8 0h2m6 0h2m-344 2h4m30 0h2m14 0h4m30 0h2m2 0h6m6 0h2m30 0h2m10 0h4m6 0h2m8 0h2m16 0h2m12 0h2m36 0h2m32 0h2m16 0h2m14 0h4m4 0h6m16 0h4m4 0h2m-342 2h2m6 0h4m2 0h6m12 0h2m14 0h4m18 0h2m18 0h4m8 0h4m4 0h2m42 0h2m2 0h10m10 0h4m4 0h12m28 0h2m8 0h2m8 0h2m18 0h2m34 0h4m8 0h6m12 0h2m2 0h4m2 0h2m4 0h2m-342 2h4m16 0h2m4 0h2m12 0h2m6 0h2m8 0h2m2 0h2m6 0h4m20 0h2m6 0h2m28 0h2m20 0h4m4 0h2m8 0h2m8 0h4m4 0h2m2 0h2m12 0h2m8 0h2m16 0h4m8 0h2m44 0h4m8 0h4m2 0h6m6 0h6m4 0h2m2 0h4m-342 2h2m4 0h2m4 0h2m42 0h6m6 0h2m10 0h6m6 0h4m18 0h2m8 0h2m26 0h6m4 0h2m16 0h6m10 0h6m6 0h4m6 0h2m4 0h2m10 0h2m8 0h2m12 0h2m2 0h2m40 0h2m2 0h2m2 0h2m8 0h2m12 0h2m-326 2h2m2 0h2m22 0h2m6 0h2m4 0h2m10 0h2m4 0h4m2 0h2m6 0h2m4 0h2m10 0h4m28 0h2m8 0h8m6 0h2m32 0h8m2 0h10m4 0h12m4 0h2m2 0h4m20 0h2m4 0h2m6 0h2m6 0h2m4 0h2m8 0h4m20 0h2m-314 2h2m2 0h4m54 0h2m4 0h4m18 0h2m14 0h2m4 0h2m20 0h2m2 0h2m8 0h2m36 0h4m6 0h8m10 0h6m2 0h2m8 0h8m26 0h2m6 0h10m4 0h4m-290 2h12m40 0h2m10 0h8m26 0h2m20 0h2m4 0h2m16 0h2m22 0h2m6 0h2m16 0h4m2 0h2m32 0h4m4 0h2m20 0h4m6 0h4m4 0h2m2 0h2m150 0h4m14 0h2m-456 2h10m6 0h4m6 0h4m2 0h2m18 0h2m2 0h2m54 0h4m118 0h4m4 0h6m10 0h2m4 0h4m2 0h2m6 0h2m4 0h4m2 0h4m4 0h2m20 0h2m116 0h2m-474 2h2m16 0h2m8 0h4m2 0h10m10 0h4m8 0h2m16 0h2m2 0h2m8 0h2m36 0h2m28 0h2m12 0h2m4 0h4m4 0h2m66 0h2m8 0h2m2 0h6m2 0h2m6 0h6m22 0h6m6 0h2m126 0h2m-444 2h4m8 0h2m2 0h4m60 0h2m12 0h2m22 0h4m22 0h2m8 0h2m2 0h2m12 0h4m14 0h4m28 0h4m8 0h2m2 0h2m64 0h12m-298 2h4m18 0h2m2 0h2m46 0h4m12 0h2m24 0h2m4 0h6m26 0h2m12 0h2m30 0h2m4 0h2m2 0h6m30 0h4m18 0h2m18 0h2m2 0h4m16 0h2m-328 2h4m12 0h2m4 0h2m2 0h2m6 0h4m8 0h4m2 0h2m4 0h2m8 0h2m8 0h2m10 0h2m6 0h2m8 0h4m8 0h2m16 0h4m24 0h4m26 0h2m16 0h2m8 0h2m2 0h2m30 0h4m4 0h2m6 0h6m2 0h2m12 0h2m10 0h6m42 0h2m-352 2h4m26 0h6m2 0h6m6 0h2m8 0h2m6 0h2m16 0h2m14 0h2m10 0h2m12 0h2m18 0h2m8 0h8m8 0h2m44 0h4m28 0h8m8 0h12m10 0h2m6 0h2m48 0h2m-350 2h2m2 0h4m12 0h2m14 0h12m18 0h4m28 0h2m2 0h4m10 0h2m8 0h2m20 0h2m10 0h6m4 0h2m6 0h8m12 0h2m20 0h2m2 0h2m20 0h4m2 0h4m2 0h4m8 0h2m24 0h6m6 0h2m10 0h2m-308 2h2m50 0h2m22 0h2m4 0h6m2 0h2m6 0h2m2 0h2m6 0h4m8 0h2m10 0h2m8 0h8m2 0h4m4 0h6m36 0h18m4 0h2m2 0h6m6 0h2m30 0h8m2 0h2m4 0h4m2 0h2m4 0h6m36 0h4m-352 2h6m38 0h2m4 0h2m18 0h2m8 0h2m4 0h6m10 0h6m6 0h4m12 0h4m14 0h8m2 0h2m2 0h4m6 0h2m8 0h2m10 0h2m6 0h2m4 0h8m2 0h2m4 0h4m26 0h2m20 0h8m8 0h4m4 0h8m106 0h4m-414 2h2m6 0h2m34 0h4m50 0h4m6 0h8m12 0h2m6 0h14m2 0h2m8 0h2m12 0h2m2 0h2m8 0h2m10 0h8m4 0h2m4 0h6m2 0h2m4 0h10m2 0h2m10 0h2m14 0h2m2 0h4m8 0h2m2 0h8m110 0h2m-436 2h2m2 0h2m10 0h10m2 0h4m2 0h2m4 0h2m6 0h2m8 0h8m2 0h2m18 0h6m12 0h2m6 0h2m2 0h6m6 0h6m2 0h4m14 0h2m2 0h6m18 0h4m2 0h4m8 0h2m18 0h4m8 0h2m4 0h20m4 0h2m16 0h2m12 0h4m2 0h2m10 0h6m-312 2h4m6 0h4m6 0h4m18 0h4m4 0h8m12 0h2m8 0h4m14 0h2m10 0h6m6 0h4m2 0h6m2 0h2m16 0h4m20 0h10m26 0h4m6 0h2m14 0h10m10 0h2m8 0h4m8 0h14m2 0h12m-326 2h4m40 0h4m18 0h4m30 0h2m16 0h2m20 0h2m6 0h2m10 0h2m2 0h2m2 0h6m10 0h4m4 0h8m2 0h2m2 0h4m44 0h8m2 0h2m14 0h4m2 0h4m6 0h2m6 0h10m2 0h10m-306 2h2m22 0h4m6 0h2m26 0h2m14 0h4m4 0h2m34 0h2m4 0h4m8 0h2m6 0h2m20 0h6m2 0h2m2 0h12m12 0h2m4 0h2m20 0h2m8 0h6m4 0h2m6 0h6m4 0h6m4 0h8m2 0h2m10 0h2m-286 2h6m8 0h2m26 0h4m4 0h2m4 0h6m42 0h4m2 0h2m6 0h4m6 0h4m14 0h10m4 0h4m2 0h8m4 0h4m2 0h4m8 0h2m10 0h4m10 0h2m4 0h6m10 0h8m2 0h4m6 0h10m10 0h2m98 0h2m14 0h2m8 0h2m-438 2h2m4 0h2m6 0h2m12 0h2m36 0h6m2 0h16m4 0h6m4 0h2m10 0h2m10 0h2m6 0h2m4 0h2m8 0h8m4 0h2m22 0h4m2 0h20m8 0h2m4 0h2m2 0h8m16 0h4m10 0h10m2 0h6m2 0h2m2 0h2m2 0h4m6 0h2m28 0h2m70 0h2m-406 2h4m4 0h2m12 0h2m20 0h2m14 0h8m4 0h4m10 0h14m12 0h2m12 0h2m6 0h6m10 0h2m2 0h4m4 0h2m2 0h4m8 0h2m2 0h2m4 0h6m8 0h4m10 0h2m2 0h2m6 0h4m8 0h2m8 0h2m8 0h10m4 0h6m8 0h2m2 0h6m2 0h8m58 0h2m-368 2h8m2 0h2m2 0h2m6 0h2m6 0h6m6 0h2m2 0h4m8 0h12m2 0h4m10 0h4m16 0h2m2 0h2m4 0h4m12 0h6m2 0h2m8 0h2m4 0h4m2 0h2m8 0h2m2 0h4m2 0h2m16 0h4m4 0h4m2 0h2m2 0h2m4 0h2m16 0h2m20 0h6m4 0h12m2 0h2m10 0h8m-312 2h2m2 0h4m22 0h2m2 0h4m12 0h2m8 0h2m4 0h6m4 0h6m4 0h10m12 0h2m10 0h2m2 0h2m8 0h8m2 0h4m10 0h4m4 0h2m6 0h4m28 0h8m16 0h4m12 0h4m4 0h2m14 0h4m6 0h10m4 0h6m4 0h8m2 0h2m44 0h2m24 0h2m-388 2h4m42 0h2m28 0h2m2 0h12m6 0h2m6 0h2m10 0h4m12 0h2m4 0h8m10 0h6m4 0h2m8 0h4m2 0h2m14 0h4m2 0h8m2 0h4m8 0h6m4 0h2m8 0h4m2 0h2m14 0h4m4 0h10m4 0h8m6 0h10m2 0h2m90 0h2m-404 2h2m6 0h2m10 0h4m34 0h4m6 0h12m18 0h4m6 0h8m16 0h4m2 0h2m12 0h8m4 0h4m2 0h10m12 0h4m8 0h8m16 0h2m16 0h4m8 0h6m4 0h2m2 0h8m8 0h4m6 0h12m86 0h2m-446 2h4m50 0h2m12 0h2m6 0h4m2 0h2m2 0h2m4 0h2m16 0h2m10 0h10m16 0h2m12 0h2m2 0h8m8 0h4m14 0h4m4 0h6m6 0h10m10 0h4m6 0h2m2 0h6m10 0h2m2 0h2m12 0h10m10 0h4m6 0h10m4 0h2m2 0h4m6 0h4m2 0h8m4 0h4m50 0h2m72 0h2m-482 2h2m28 0h2m10 0h2m6 0h2m4 0h2m10 0h2m6 0h2m2 0h4m28 0h2m12 0h2m8 0h2m4 0h4m4 0h2m2 0h4m6 0h2m8 0h2m8 0h2m4 0h4m2 0h4m12 0h2m8 0h2m2 0h8m6 0h10m2 0h8m14 0h2m4 0h4m4 0h2m8 0h2m8 0h8m2 0h2m2 0h2m8 0h6m8 0h2m4 0h6m18 0h8m20 0h6m22 0h2m-440 2h2m36 0h2m14 0h2m2 0h2m2 0h2m16 0h2m2 0h8m4 0h2m2 0h2m8 0h2m16 0h6m4 0h6m8 0h4m4 0h4m10 0h2m4 0h4m6 0h2m2 0h4m18 0h2m8 0h4m8 0h4m2 0h2m4 0h4m10 0h2m4 0h6m10 0h2m16 0h2m8 0h2m2 0h2m2 0h2m2 0h2m6 0h10m2 0h2m2 0h6m2 0h2m2 0h2m14 0h6m6 0h2m6 0h2m48 0h2m8 0h2m-422 2h4m10 0h2m30 0h4m8 0h8m2 0h6m2 0h2m2 0h6m6 0h16m18 0h2m4 0h4m14 0h10m10 0h2m6 0h2m8 0h2m16 0h2m18 0h6m2 0h4m20 0h2m14 0h10m4 0h2m6 0h2m6 0h6m10 0h8m2 0h8m2 0h6m2 0h2m4 0h6m8 0h2m-368 2h4m8 0h4m4 0h2m6 0h4m6 0h4m14 0h2m10 0h4m6 0h4m10 0h4m2 0h4m6 0h4m4 0h2m4 0h14m6 0h2m8 0h6m8 0h4m4 0h2m10 0h4m14 0h4m18 0h2m6 0h8m4 0h4m2 0h6m26 0h2m10 0h2m2 0h14m6 0h4m2 0h10m6 0h18m6 0h10m50 0h2m-422 2h2m4 0h2m6 0h6m2 0h2m2 0h2m18 0h2m16 0h4m28 0h2m4 0h26m6 0h4m2 0h2m10 0h2m6 0h8m2 0h2m4 0h2m8 0h2m10 0h2m10 0h4m6 0h2m2 0h2m2 0h2m4 0h2m4 0h8m28 0h6m6 0h2m10 0h8m4 0h12m2 0h2m2 0h2m4 0h18m4 0h16m-378 2h2m14 0h6m4 0h4m52 0h2m2 0h2m12 0h8m2 0h12m8 0h2m6 0h4m2 0h2m20 0h4m2 0h2m12 0h10m6 0h2m14 0h2m14 0h6m2 0h8m2 0h4m12 0h4m8 0h2m4 0h2m4 0h2m2 0h8m4 0h2m8 0h4m2 0h2m4 0h8m4 0h16m4 0h10m2 0h4m22 0h2m-406 2h2m30 0h2m8 0h2m2 0h4m4 0h4m14 0h2m6 0h2m6 0h4m2 0h4m6 0h8m2 0h2m6 0h2m44 0h6m2 0h2m14 0h8m4 0h6m40 0h2m18 0h8m4 0h4m2 0h10m2 0h2m4 0h8m2 0h2m10 0h2m4 0h8m2 0h14m2 0h14m2 0h6m26 0h2m-410 2h2m32 0h2m6 0h2m4 0h2m6 0h6m2 0h2m22 0h8m8 0h8m6 0h2m8 0h6m8 0h2m22 0h6m10 0h6m6 0h6m4 0h2m2 0h2m22 0h2m14 0h2m14 0h4m6 0h4m4 0h8m4 0h2m2 0h20m6 0h10m2 0h2m2 0h14m2 0h6m2 0h4m2 0h2m8 0h4m24 0h2m-410 2h2m8 0h6m10 0h2m20 0h2m10 0h6m4 0h2m18 0h2m2 0h4m6 0h4m2 0h2m2 0h4m10 0h4m4 0h2m10 0h2m2 0h4m12 0h2m6 0h2m4 0h2m4 0h2m18 0h6m18 0h2m4 0h2m2 0h4m12 0h2m2 0h14m6 0h6m8 0h4m4 0h10m2 0h4m2 0h2m4 0h6m2 0h2m4 0h4m10 0h18m6 0h4m-360 2h2m2 0h4m10 0h2m4 0h4m4 0h2m22 0h4m10 0h4m8 0h2m6 0h6m8 0h2m12 0h12m2 0h4m14 0h4m6 0h4m10 0h8m2 0h4m10 0h2m8 0h6m4 0h4m2 0h4m4 0h2m8 0h4m2 0h4m6 0h6m16 0h12m2 0h2m2 0h2m6 0h4m2 0h6m4 0h2m2 0h2m6 0h10m2 0h6m2 0h2m2 0h2m58 0h2m-446 2h4m20 0h2m12 0h4m2 0h4m28 0h2m22 0h2m4 0h6m2 0h4m2 0h4m10 0h4m6 0h2m2 0h2m4 0h2m2 0h2m6 0h6m4 0h2m2 0h10m8 0h8m22 0h2m6 0h4m2 0h4m2 0h12m6 0h2m2 0h8m2 0h8m2 0h8m6 0h2m2 0h4m4 0h2m4 0h10m2 0h14m2 0h4m2 0h10m2 0h20m8 0h2m22 0h2m20 0h2m-428 2h2m14 0h2m2 0h8m6 0h2m12 0h4m28 0h6m6 0h6m10 0h4m2 0h2m12 0h6m4 0h2m6 0h12m2 0h2m4 0h2m2 0h6m50 0h2m12 0h4m8 0h6m4 0h12m2 0h16m8 0h48m8 0h6m4 0h2m-370 2h4m6 0h2m12 0h4m18 0h10m26 0h12m6 0h2m8 0h2m2 0h2m10 0h12m4 0h12m14 0h6m24 0h2m14 0h4m10 0h2m2 0h4m14 0h2m2 0h10m2 0h4m8 0h22m4 0h22m2 0h4m2 0h10m2 0h6m8 0h4m4 0h4m68 0h2m-458 2h2m20 0h4m16 0h2m12 0h10m2 0h2m6 0h10m16 0h8m18 0h2m14 0h22m22 0h4m2 0h4m24 0h2m8 0h2m14 0h2m2 0h4m14 0h6m2 0h2m2 0h2m4 0h12m2 0h8m6 0h2m4 0h12m2 0h32m16 0h2m-432 2h2m44 0h4m12 0h2m6 0h4m8 0h2m4 0h8m6 0h6m2 0h2m8 0h2m2 0h8m16 0h2m4 0h6m12 0h2m6 0h2m8 0h18m22 0h6m4 0h6m2 0h4m10 0h2m4 0h4m4 0h2m2 0h2m14 0h2m12 0h2m6 0h2m2 0h2m6 0h14m6 0h6m4 0h2m8 0h8m2 0h40m4 0h10m-386 2h4m2 0h4m22 0h4m6 0h8m2 0h4m8 0h4m6 0h8m12 0h4m4 0h12m6 0h4m14 0h2m6 0h4m4 0h10m2 0h8m8 0h24m12 0h2m2 0h10m14 0h2m38 0h12m2 0h10m12 0h8m2 0h8m2 0h4m2 0h16m2 0h8m2 0h4m4 0h2m-436 2h2m48 0h10m6 0h2m8 0h2m2 0h4m16 0h2m2 0h4m22 0h6m2 0h4m4 0h4m6 0h6m8 0h4m20 0h6m4 0h14m18 0h12m2 0h2m2 0h2m18 0h2m2 0h2m4 0h2m8 0h2m2 0h2m14 0h2m2 0h8m2 0h2m8 0h2m4 0h6m2 0h4m2 0h2m2 0h2m8 0h16m4 0h18m6 0h8m4 0h2m4 0h4m-388 2h4m8 0h14m28 0h4m22 0h6m4 0h4m12 0h6m10 0h4m2 0h8m2 0h4m4 0h4m6 0h2m2 0h8m8 0h2m2 0h2m8 0h6m8 0h2m4 0h2m6 0h2m4 0h2m2 0h2m6 0h4m2 0h6m6 0h2m12 0h2m2 0h4m14 0h10m4 0h2m6 0h8m4 0h24m2 0h8m2 0h2m2 0h12m4 0h2m56 0h2m-468 2h2m40 0h8m2 0h6m6 0h2m6 0h2m2 0h2m48 0h8m2 0h4m6 0h2m2 0h2m4 0h10m24 0h8m6 0h2m2 0h6m12 0h6m2 0h4m10 0h2m10 0h10m4 0h2m24 0h10m8 0h8m12 0h6m2 0h2m10 0h18m2 0h4m2 0h2m2 0h16m4 0h2m2 0h2m52 0h2m-438 2h2m8 0h4m4 0h4m6 0h2m4 0h2m6 0h6m32 0h4m14 0h20m24 0h2m16 0h8m6 0h2m4 0h4m12 0h4m2 0h6m10 0h2m4 0h14m6 0h4m22 0h6m14 0h6m2 0h2m8 0h4m12 0h2m2 0h6m2 0h12m2 0h20m2 0h6m2 0h6m20 0h2m-402 2h2m2 0h2m8 0h2m6 0h2m6 0h4m30 0h2m10 0h2m12 0h8m2 0h2m4 0h6m20 0h6m16 0h2m16 0h8m4 0h2m2 0h4m4 0h4m16 0h10m2 0h2m6 0h2m14 0h6m4 0h14m8 0h2m4 0h2m8 0h2m6 0h2m14 0h4m2 0h30m2 0h2m2 0h8m2 0h4m-384 2h4m12 0h2m18 0h2m56 0h8m8 0h2m6 0h12m2 0h2m4 0h2m2 0h2m30 0h8m4 0h10m2 0h10m12 0h2m2 0h10m8 0h2m2 0h2m8 0h6m10 0h4m6 0h6m2 0h2m8 0h2m2 0h8m14 0h4m10 0h4m2 0h10m4 0h4m2 0h4m4 0h4m-396 2h2m14 0h6m2 0h4m24 0h2m4 0h2m30 0h2m14 0h2m2 0h10m12 0h4m2 0h8m2 0h2m4 0h4m30 0h4m2 0h4m2 0h2m2 0h4m8 0h12m4 0h4m4 0h2m6 0h2m12 0h2m2 0h2m4 0h14m2 0h2m2 0h2m2 0h2m2 0h4m6 0h2m10 0h2m4 0h2m10 0h2m4 0h2m4 0h6m6 0h8m2 0h2m2 0h10m6 0h8m-402 2h2m14 0h4m6 0h4m30 0h2m2 0h2m14 0h2m16 0h4m12 0h2m2 0h2m14 0h2m18 0h2m12 0h4m10 0h2m10 0h4m6 0h4m2 0h2m4 0h12m4 0h2m12 0h6m4 0h6m2 0h6m6 0h6m6 0h4m6 0h6m10 0h2m4 0h8m16 0h26m2 0h16m2 0h2m2 0h6m-400 2h2m14 0h4m14 0h2m12 0h6m44 0h4m8 0h2m4 0h2m12 0h2m2 0h2m64 0h2m2 0h4m2 0h2m2 0h6m4 0h4m12 0h6m2 0h6m2 0h6m2 0h4m4 0h4m2 0h4m6 0h4m4 0h10m4 0h2m2 0h4m2 0h8m2 0h4m8 0h6m2 0h4m4 0h16m4 0h14m2 0h6m12 0h2m-386 2h8m14 0h2m4 0h2m10 0h2m20 0h6m12 0h2m20 0h4m18 0h2m16 0h2m20 0h4m10 0h2m4 0h2m10 0h4m6 0h2m10 0h6m4 0h4m2 0h6m2 0h4m2 0h2m8 0h18m4 0h2m2 0h6m4 0h8m12 0h12m4 0h16m2 0h16m16 0h2m4 0h2m-448 2h4m56 0h10m28 0h2m8 0h2m14 0h2m14 0h6m16 0h4m14 0h2m2 0h2m2 0h2m10 0h4m4 0h4m10 0h6m10 0h2m10 0h4m4 0h2m18 0h6m12 0h6m2 0h2m4 0h2m2 0h6m6 0h2m2 0h2m2 0h4m4 0h2m2 0h6m2 0h10m12 0h14m2 0h6m8 0h4m4 0h4m24 0h2m-388 2h2m2 0h8m10 0h2m26 0h6m6 0h2m16 0h2m8 0h4m6 0h4m4 0h2m12 0h4m4 0h4m8 0h6m6 0h2m10 0h8m10 0h2m4 0h8m4 0h2m6 0h2m10 0h8m2 0h2m6 0h4m14 0h6m4 0h2m2 0h2m2 0h32m14 0h12m2 0h6m10 0h2m2 0h6m22 0h2m-418 2h2m30 0h2m6 0h4m2 0h4m4 0h2m8 0h2m16 0h6m6 0h2m4 0h4m24 0h8m10 0h4m6 0h2m4 0h4m4 0h2m6 0h8m14 0h4m10 0h6m8 0h2m4 0h2m4 0h6m14 0h2m26 0h2m6 0h2m2 0h4m4 0h22m4 0h14m4 0h22m2 0h4m2 0h4m4 0h4m2 0h2m-364 2h2m2 0h2m2 0h2m4 0h2m4 0h2m28 0h6m10 0h8m16 0h2m2 0h4m14 0h14m4 0h2m14 0h2m2 0h2m4 0h4m4 0h8m12 0h2m6 0h2m2 0h6m4 0h6m6 0h2m14 0h2m8 0h2m12 0h2m2 0h8m4 0h10m2 0h2m2 0h8m2 0h2m2 0h12m2 0h6m2 0h4m4 0h18m4 0h4m-312 2h2m16 0h2m22 0h2m4 0h4m10 0h8m2 0h2m2 0h2m10 0h2m2 0h2m6 0h2m4 0h2m12 0h4m8 0h4m2 0h2m8 0h4m2 0h8m32 0h6m6 0h4m10 0h2m6 0h4m2 0h2m2 0h8m4 0h2m2 0h2m4 0h2m2 0h4m2 0h8m2 0h4m2 0h8m4 0h2m46 0h2m-320 2h2m6 0h2m6 0h8m2 0h2m4 0h6m4 0h8m2 0h2m12 0h2m8 0h4m12 0h4m8 0h2m4 0h4m2 0h2m10 0h4m2 0h2m10 0h2m12 0h2m4 0h2m10 0h10m6 0h6m4 0h2m2 0h12m16 0h18m2 0h2m4 0h2m12 0h2m-344 2h2m16 0h2m16 0h4m14 0h4m6 0h2m16 0h4m14 0h6m2 0h4m2 0h2m4 0h2m6 0h8m16 0h2m2 0h2m4 0h2m30 0h6m2 0h6m2 0h2m2 0h2m16 0h4m6 0h2m4 0h8m2 0h2m2 0h2m2 0h2m8 0h4m8 0h2m6 0h30m2 0h4m-298 2h2m4 0h2m6 0h6m10 0h2m2 0h2m4 0h4m4 0h2m12 0h2m2 0h2m8 0h4m6 0h2m6 0h4m2 0h2m14 0h4m8 0h2m18 0h6m10 0h8m2 0h6m6 0h2m12 0h4m16 0h4m6 0h2m14 0h2m2 0h6m10 0h32m-394 2h2m76 0h2m10 0h6m30 0h4m16 0h2m12 0h4m2 0h4m2 0h4m4 0h6m4 0h4m12 0h2m24 0h4m2 0h2m6 0h2m4 0h8m6 0h2m2 0h6m2 0h8m18 0h4m10 0h2m14 0h2m2 0h8m12 0h2m2 0h6m2 0h4m2 0h2m4 0h8m6 0h2m84 0h2m-404 2h2m8 0h10m2 0h4m2 0h2m16 0h6m28 0h2m4 0h6m8 0h6m2 0h6m14 0h6m6 0h2m18 0h2m2 0h4m6 0h2m2 0h2m4 0h10m4 0h2m6 0h8m2 0h2m2 0h8m12 0h4m10 0h2m4 0h8m2 0h2m4 0h4m4 0h4m4 0h2m2 0h2m2 0h6m32 0h2m64 0h2m-408 2h4m14 0h4m8 0h2m24 0h2m2 0h4m8 0h4m10 0h6m12 0h14m16 0h10m6 0h2m2 0h2m14 0h8m6 0h2m2 0h6m16 0h6m2 0h2m4 0h6m6 0h6m14 0h4m2 0h6m24 0h4m4 0h4m100 0h2m-490 2h2m72 0h2m6 0h4m8 0h2m6 0h4m10 0h6m4 0h2m8 0h2m6 0h4m2 0h2m4 0h4m2 0h2m2 0h2m12 0h2m6 0h6m2 0h6m4 0h4m8 0h2m2 0h6m4 0h2m2 0h2m24 0h2m12 0h2m4 0h2m10 0h2m6 0h4m2 0h8m8 0h4m2 0h2m20 0h6m4 0h2m12 0h2m-360 2h2m50 0h6m8 0h2m26 0h6m8 0h2m18 0h6m20 0h4m12 0h6m6 0h2m4 0h4m4 0h2m16 0h8m22 0h2m20 0h2m2 0h2m2 0h4m6 0h2m2 0h12m8 0h2m8 0h10m6 0h6m4 0h6m6 0h4m6 0h2m-318 2h4m10 0h6m16 0h10m2 0h4m6 0h4m2 0h4m10 0h4m2 0h2m14 0h2m2 0h6m2 0h2m14 0h2m2 0h2m10 0h2m36 0h10m34 0h4m6 0h2m2 0h2m2 0h6m8 0h4m8 0h2m12 0h2m2 0h2m-272 2h8m10 0h2m10 0h2m16 0h4m8 0h2m4 0h2m4 0h2m12 0h6m2 0h6m4 0h2m8 0h2m2 0h4m6 0h2m28 0h2m4 0h8m26 0h2m8 0h4m2 0h2m2 0h4m2 0h4m8 0h6m6 0h2m6 0h2m2 0h10m4 0h4m108 0h2m2 0h2m-388 2h2m64 0h8m4 0h10m2 0h2m2 0h4m12 0h2m12 0h4m8 0h2m16 0h2m4 0h16m4 0h2m8 0h6m18 0h6m6 0h2m6 0h2m6 0h4m2 0h2m2 0h6m2 0h2m2 0h4m4 0h4m2 0h4m8 0h2m94 0h2m-428 2h2m44 0h4m10 0h6m2 0h4m8 0h4m6 0h2m18 0h4m2 0h2m2 0h4m12 0h2m6 0h2m2 0h2m2 0h4m12 0h4m2 0h10m4 0h38m4 0h10m16 0h4m6 0h2m8 0h10m2 0h2m2 0h4m10 0h10m2 0h2m-276 2h2m18 0h4m2 0h2m6 0h2m2 0h2m8 0h2m2 0h2m10 0h2m2 0h2m6 0h2m4 0h4m20 0h2m2 0h4m2 0h4m4 0h2m2 0h12m6 0h20m2 0h14m14 0h2m2 0h2m34 0h6m4 0h4m12 0h10m120 0h2m-452 2h2m10 0h2m50 0h2m16 0h6m4 0h4m2 0h2m6 0h2m24 0h2m2 0h2m2 0h6m2 0h2m18 0h2m4 0h4m12 0h2m8 0h42m4 0h2m2 0h2m2 0h4m22 0h4m14 0h4m2 0h6m8 0h6m4 0h2m60 0h2m26 0h6m26 0h2m6 0h2m-396 2h2m8 0h2m8 0h2m14 0h8m14 0h2m8 0h2m4 0h4m18 0h2m8 0h4m16 0h4m4 0h44m4 0h12m24 0h4m2 0h2m8 0h2m8 0h2m6 0h4m2 0h2m2 0h2m60 0h2m30 0h4m-386 2h6m4 0h2m18 0h2m4 0h4m6 0h4m6 0h2m4 0h8m6 0h4m10 0h6m4 0h4m18 0h2m8 0h10m12 0h30m2 0h18m2 0h6m8 0h2m2 0h2m18 0h4m26 0h6m4 0h6m92 0h2m40 0h2m-424 2h2m6 0h2m18 0h2m10 0h2m2 0h6m12 0h8m2 0h2m2 0h4m2 0h2m8 0h8m28 0h6m2 0h6m6 0h24m2 0h12m2 0h16m2 0h2m2 0h4m10 0h4m14 0h2m4 0h2m18 0h2m14 0h4m34 0h2m-388 2h2m10 0h2m54 0h4m6 0h4m2 0h2m14 0h4m2 0h2m6 0h2m16 0h2m2 0h12m4 0h2m4 0h6m16 0h4m8 0h12m2 0h2m4 0h20m2 0h32m2 0h8m2 0h4m16 0h2m6 0h6m8 0h2m8 0h4m16 0h2m2 0h2m28 0h4m30 0h2m-398 2h2m42 0h6m12 0h2m8 0h4m2 0h4m2 0h2m2 0h6m8 0h2m6 0h2m2 0h4m2 0h16m16 0h4m4 0h2m18 0h6m6 0h18m4 0h30m4 0h6m8 0h2m6 0h2m8 0h2m4 0h4m18 0h2m4 0h2m6 0h4m6 0h2m102 0h2m-392 2h4m42 0h2m16 0h2m2 0h4m8 0h12m2 0h2m4 0h2m4 0h2m4 0h4m2 0h4m10 0h8m4 0h20m2 0h4m2 0h6m2 0h22m4 0h8m6 0h4m2 0h2m4 0h6m2 0h4m4 0h16m12 0h2m-278 2h4m34 0h4m2 0h8m10 0h10m12 0h4m10 0h2m20 0h2m14 0h4m4 0h26m2 0h38m8 0h2m12 0h38m98 0h2m-370 2h4m32 0h4m6 0h2m2 0h2m14 0h2m2 0h2m2 0h2m16 0h4m8 0h2m38 0h8m2 0h20m2 0h12m8 0h12m16 0h2m10 0h34m-344 2h2m42 0h2m30 0h2m6 0h4m18 0h6m12 0h2m4 0h2m10 0h2m2 0h2m14 0h2m20 0h4m6 0h2m20 0h26m6 0h14m4 0h16m2 0h2m2 0h4m2 0h2m2 0h22m2 0h22m18 0h4m-280 2h8m12 0h4m6 0h2m20 0h6m8 0h2m2 0h2m10 0h2m14 0h6m4 0h2m2 0h2m8 0h2m6 0h30m2 0h32m4 0h6m6 0h22m6 0h10m2 0h8m16 0h6m128 0h2m-416 2h6m4 0h4m22 0h6m6 0h4m4 0h2m2 0h2m12 0h6m28 0h2m4 0h4m2 0h2m6 0h2m6 0h62m6 0h4m6 0h48m2 0h2m14 0h6m52 0h2m2 0h2m72 0h2m-480 2h2m64 0h2m2 0h6m2 0h2m18 0h6m4 0h14m12 0h8m20 0h2m4 0h2m4 0h4m12 0h2m2 0h2m6 0h8m2 0h48m8 0h2m4 0h6m2 0h24m2 0h4m2 0h10m-298 2h2m44 0h2m24 0h4m8 0h2m2 0h6m2 0h4m2 0h6m6 0h4m6 0h2m14 0h6m18 0h4m8 0h60m4 0h2m8 0h48m6 0h4m10 0h2m-368 2h2m90 0h4m8 0h2m26 0h6m2 0h10m2 0h2m8 0h4m4 0h2m18 0h2m20 0h4m10 0h60m10 0h14m4 0h6m2 0h34m4 0h4m8 0h2m32 0h2m-408 2h2m96 0h2m2 0h2m4 0h4m24 0h2m4 0h4m12 0h2m4 0h2m4 0h2m8 0h2m10 0h2m4 0h2m10 0h4m2 0h2m4 0h2m2 0h28m4 0h28m6 0h22m2 0h34m2 0h4m2 0h8m76 0h2m42 0h2m-380 2h4m2 0h2m8 0h2m12 0h6m4 0h2m4 0h2m6 0h6m2 0h2m2 0h4m2 0h2m6 0h2m4 0h4m10 0h4m10 0h2m4 0h22m2 0h10m2 0h22m6 0h2m4 0h24m2 0h12m2 0h20m4 0h4m4 0h2m8 0h2m-288 2h2m12 0h10m4 0h2m14 0h10m14 0h8m6 0h2m2 0h4m2 0h2m4 0h2m14 0h2m10 0h2m6 0h32m2 0h18m2 0h2m4 0h2m4 0h2m2 0h16m2 0h40m-268 2h2m16 0h2m4 0h8m2 0h2m6 0h2m6 0h2m2 0h2m2 0h2m16 0h2m2 0h2m8 0h6m2 0h4m10 0h2m18 0h2m6 0h56m10 0h12m2 0h20m2 0h24m-240 2h4m2 0h4m6 0h4m8 0h2m8 0h2m10 0h2m2 0h4m8 0h8m10 0h6m2 0h6m4 0h2m2 0h2m8 0h6m2 0h34m2 0h12m12 0h8m2 0h48m8 0h4m44 0h2m-286 2h4m10 0h6m14 0h2m2 0h4m10 0h6m8 0h2m2 0h2m4 0h2m4 0h2m18 0h4m4 0h32m6 0h14m8 0h30m2 0h14m2 0h8m10 0h8m2 0h2m22 0h4m-426 2h4m48 0h2m60 0h4m24 0h2m6 0h4m12 0h6m14 0h8m16 0h2m6 0h4m8 0h2m2 0h2m18 0h6m2 0h48m4 0h2m6 0h2m2 0h2m2 0h14m2 0h4m4 0h30m2 0h2m4 0h10m-286 2h2m4 0h6m14 0h2m2 0h2m8 0h8m4 0h4m12 0h12m2 0h4m4 0h4m10 0h12m2 0h6m6 0h4m4 0h28m2 0h24m6 0h2m10 0h2m2 0h12m6 0h2m2 0h14m2 0h10m16 0h2m-298 2h2m4 0h4m2 0h4m2 0h6m2 0h4m12 0h2m10 0h2m4 0h6m2 0h2m2 0h2m2 0h4m4 0h4m2 0h8m2 0h2m2 0h10m6 0h6m12 0h2m4 0h8m6 0h28m2 0h12m16 0h2m10 0h18m2 0h32m14 0h6m-316 2h6m24 0h2m6 0h4m12 0h2m2 0h2m8 0h2m6 0h4m6 0h16m6 0h6m12 0h4m32 0h4m10 0h26m2 0h10m10 0h2m16 0h14m2 0h4m2 0h2m2 0h24m12 0h6m2 0h4m-444 2h2m166 0h4m10 0h2m8 0h2m10 0h2m10 0h2m6 0h6m4 0h2m10 0h2m52 0h2m2 0h2m4 0h14m2 0h8m2 0h2m2 0h2m4 0h2m12 0h2m10 0h12m2 0h8m6 0h22m16 0h2m-326 2h2m18 0h2m8 0h2m2 0h2m4 0h2m2 0h2m8 0h4m26 0h2m4 0h2m6 0h8m6 0h4m12 0h2m4 0h4m26 0h4m16 0h6m8 0h10m2 0h2m2 0h6m10 0h4m10 0h4m12 0h6m4 0h30m2 0h2m26 0h4m20 0h2m-368 2h2m28 0h2m18 0h2m2 0h4m10 0h2m12 0h2m12 0h2m2 0h6m6 0h6m4 0h8m12 0h2m2 0h4m16 0h2m2 0h4m2 0h4m18 0h2m12 0h4m2 0h2m6 0h4m6 0h2m4 0h4m10 0h4m2 0h2m2 0h2m4 0h8m2 0h30m18 0h4m2 0h2m6 0h2m4 0h2m14 0h4m-382 2h2m6 0h4m30 0h4m16 0h2m14 0h4m24 0h4m4 0h6m4 0h4m6 0h4m10 0h4m6 0h2m14 0h4m4 0h8m10 0h2m10 0h2m10 0h2m2 0h2m10 0h2m10 0h2m32 0h40m14 0h8m-350 2h2m8 0h4m4 0h4m8 0h4m16 0h2m2 0h4m4 0h4m16 0h2m12 0h2m12 0h8m2 0h4m10 0h4m14 0h2m4 0h12m8 0h4m2 0h4m2 0h4m22 0h4m6 0h4m12 0h4m10 0h2m26 0h4m2 0h14m2 0h4m6 0h10m2 0h2m6 0h6m2 0h2m10 0h2m-354 2h2m14 0h2m10 0h2m4 0h2m2 0h2m8 0h4m2 0h2m2 0h4m14 0h2m14 0h4m12 0h2m2 0h10m4 0h2m10 0h2m8 0h4m2 0h2m18 0h2m6 0h4m2 0h2m4 0h2m2 0h2m4 0h2m8 0h2m4 0h2m2 0h4m60 0h8m8 0h4m4 0h12m2 0h2m2 0h6m-322 2h4m26 0h12m10 0h2m26 0h4m12 0h4m4 0h6m6 0h2m6 0h2m2 0h10m2 0h2m14 0h2m2 0h2m2 0h2m10 0h2m2 0h2m2 0h2m14 0h4m6 0h2m8 0h2m22 0h4m2 0h4m20 0h8m2 0h4m10 0h8m8 0h2m2 0h6m16 0h2m-356 2h4m28 0h2m8 0h2m2 0h14m4 0h2m16 0h2m2 0h2m8 0h2m16 0h6m24 0h2m8 0h6m6 0h10m2 0h2m4 0h2m24 0h2m8 0h6m26 0h2m44 0h2m12 0h6m14 0h2m2 0h2m4 0h2m-336 2h2m20 0h2m10 0h2m10 0h6m6 0h2m6 0h4m6 0h2m4 0h4m20 0h2m2 0h2m2 0h2m18 0h6m2 0h2m10 0h2m2 0h8m10 0h4m16 0h4m12 0h2m4 0h2m4 0h2m16 0h2m2 0h2m8 0h2m4 0h2m16 0h2m6 0h2m2 0h4m10 0h2m4 0h2m20 0h2m22 0h2m-348 2h2m10 0h2m8 0h6m2 0h6m10 0h6m4 0h2m4 0h4m4 0h4m22 0h12m4 0h2m2 0h2m18 0h8m4 0h6m4 0h2m4 0h4m8 0h6m2 0h2m6 0h2m12 0h4m18 0h2m6 0h2m4 0h4m4 0h4m2 0h6m4 0h4m14 0h10m6 0h4m22 0h2m8 0h2m-398 2h2m32 0h2m58 0h4m6 0h8m34 0h4m2 0h2m2 0h4m2 0h4m4 0h4m2 0h2m18 0h8m14 0h4m8 0h4m2 0h8m24 0h2m6 0h2m2 0h2m2 0h2m14 0h4m6 0h2m4 0h6m4 0h6m10 0h6m2 0h4m14 0h2m6 0h4m6 0h2m8 0h6m-394 2h2m22 0h4m48 0h2m16 0h10m4 0h2m4 0h2m22 0h6m12 0h4m8 0h2m20 0h6m8 0h2m16 0h2m42 0h4m4 0h2m4 0h2m12 0h2m12 0h2m10 0h2m4 0h4m4 0h6m10 0h2m10 0h4m-416 2h2m112 0h4m2 0h6m20 0h6m6 0h2m16 0h4m6 0h4m18 0h2m2 0h2m14 0h2m22 0h2m18 0h4m10 0h4m2 0h4m2 0h2m16 0h2m26 0h2m2 0h4m6 0h2m4 0h4m4 0h2m6 0h2m6 0h2m6 0h2m14 0h4m24 0h2m-370 2h2m34 0h8m4 0h6m8 0h4m8 0h6m22 0h8m8 0h4m14 0h6m10 0h2m2 0h2m4 0h2m18 0h6m12 0h2m12 0h2m4 0h4m6 0h2m6 0h4m4 0h2m2 0h2m2 0h2m8 0h2m26 0h2m4 0h2m8 0h2m18 0h6m-306 2h2m4 0h6m8 0h2m12 0h4m4 0h4m28 0h2m2 0h4m2 0h8m14 0h4m38 0h2m4 0h2m30 0h2m26 0h2m18 0h2m44 0h2m4 0h2m14 0h2m4 0h2m4 0h2m14 0h2m-328 2h6m24 0h4m14 0h4m10 0h6m4 0h2m8 0h4m14 0h6m10 0h2m18 0h2m6 0h2m2 0h4m6 0h6m10 0h2m4 0h2m18 0h4m6 0h2m18 0h4m22 0h4m32 0h2m2 0h2m2 0h2m8 0h4m52 0h4m-410 2h4m36 0h4m2 0h2m16 0h2m4 0h4m4 0h4m6 0h4m10 0h4m14 0h4m14 0h2m14 0h2m8 0h2m22 0h10m4 0h2m28 0h2m4 0h6m4 0h4m16 0h2m28 0h6m10 0h2m12 0h6m24 0h2m6 0h2m-406 2h2m74 0h2m2 0h2m14 0h10m4 0h2m16 0h2m12 0h2m4 0h2m2 0h2m6 0h2m26 0h2m2 0h2m8 0h2m10 0h2m12 0h6m12 0h2m30 0h2m2 0h2m2 0h4m4 0h2m10 0h10m14 0h4m28 0h2m-274 2h2m12 0h2m20 0h2m18 0h4m8 0h2m10 0h2m16 0h2m10 0h2m12 0h4m4 0h2m58 0h12m14 0h8m2 0h2m4 0h10m28 0h6m26 0h6m-430 2h4m26 0h2m10 0h6m50 0h2m8 0h2m2 0h2m2 0h2m36 0h2m18 0h4m16 0h2m4 0h2m2 0h2m8 0h2m16 0h2m14 0h2m8 0h2m26 0h2m6 0h2m14 0h14m14 0h6m2 0h2m12 0h2m24 0h2m4 0h6m14 0h2m4 0h10m38 0h2m-436 2h2m8 0h6m28 0h2m20 0h2m12 0h2m26 0h6m6 0h2m16 0h4m16 0h6m6 0h8m16 0h2m20 0h2m28 0h2m8 0h2m22 0h4m12 0h8m4 0h4m26 0h2m6 0h4m10 0h6m6 0h4m8 0h6m20 0h2m22 0h2m-424 2h2m44 0h4m6 0h2m14 0h6m18 0h4m14 0h4m8 0h2m14 0h4m4 0h2m14 0h2m4 0h2m76 0h2m10 0h2m20 0h4m2 0h4m38 0h6m14 0h2m28 0h2m8 0h6m-418 2h2m50 0h2m8 0h2m2 0h4m2 0h6m6 0h4m8 0h4m22 0h2m16 0h2m32 0h2m10 0h2m32 0h2m104 0h2m26 0h4m12 0h2m10 0h2m8 0h2m8 0h2m8 0h4m10 0h2m-428 2h2m50 0h2m20 0h2m2 0h2m2 0h6m6 0h8m8 0h2m46 0h4m2 0h4m18 0h2m12 0h2m34 0h2m16 0h2m60 0h6m18 0h4m10 0h2m2 0h2m4 0h2m46 0h4m-448 2h2m14 0h2m98 0h16m4 0h2m14 0h4m8 0h6m20 0h2m4 0h8m76 0h4m8 0h2m54 0h2m6 0h2m10 0h2m6 0h2m8 0h4m48 0h2m6 0h4m20 0h2m-460 2h2m52 0h2m12 0h4m20 0h2m12 0h2m4 0h2m6 0h12m2 0h2m4 0h2m12 0h6m8 0h2m2 0h6m2 0h2m8 0h4m2 0h2m62 0h2m28 0h2m42 0h2m24 0h2m14 0h2m14 0h4m2 0h2m22 0h8m2 0h2m22 0h2m-396 2h2m34 0h2m8 0h4m6 0h4m2 0h2m2 0h4m6 0h2m16 0h6m8 0h4m14 0h10m52 0h2m8 0h2m42 0h2m32 0h2m18 0h4m8 0h2m20 0h2m4 0h6m18 0h4m2 0h4m-428 2h2m94 0h2m6 0h6m2 0h4m10 0h4m36 0h4m4 0h2m12 0h2m4 0h2m82 0h2m66 0h2m8 0h4m6 0h2m2 0h2m16 0h2m2 0h6m2 0h4m4 0h2m14 0h4m-366 2h2m36 0h2m2 0h6m34 0h4m18 0h2m6 0h2m8 0h2m54 0h2m14 0h2m20 0h2m26 0h2m40 0h2m6 0h4m8 0h2m2 0h2m12 0h4m32 0h4m-442 2h2m34 0h2m40 0h2m32 0h12m2 0h4m12 0h2m2 0h2m34 0h4m20 0h4m46 0h4m82 0h2m42 0h2m16 0h2m28 0h2m4 0h4m42 0h2m-452 2h2m4 0h2m2 0h4m10 0h2m6 0h2m6 0h2m8 0h2m32 0h2m6 0h2m14 0h2m8 0h2m12 0h4m4 0h2m4 0h2m12 0h2m8 0h2m22 0h2m24 0h2m68 0h2m6 0h2m8 0h2m16 0h4m34 0h2m14 0h2m6 0h2m14 0h2m2 0h2m18 0h2m-432 2h6m6 0h4m26 0h2m36 0h2m2 0h2m12 0h2m20 0h2m2 0h2m6 0h6m20 0h10m4 0h2m8 0h2m74 0h2m32 0h2m56 0h2m8 0h4m4 0h2m10 0h4m4 0h2m16 0h4m-408 2h2m8 0h2m8 0h4m14 0h4m22 0h2m12 0h2m16 0h2m24 0h2m8 0h4m2 0h2m20 0h6m8 0h4m4 0h2m58 0h2m24 0h6m14 0h2m50 0h2m16 0h2m6 0h4m8 0h2m24 0h2m-408 2h2m10 0h2m18 0h2m4 0h4m22 0h2m2 0h2m16 0h2m14 0h2m24 0h10m40 0h2m2 0h2m28 0h2m20 0h2m20 0h2m14 0h2m16 0h2m66 0h8m4 0h6m14 0h6m4 0h2m4 0h2m22 0h2m-464 2h4m28 0h2m10 0h2m16 0h4m52 0h2m10 0h6m4 0h2m18 0h6m2 0h2m40 0h2m4 0h2m48 0h4m32 0h2m90 0h2m8 0h2m6 0h6m4 0h4m2 0h4m4 0h2m40 0h2m-458 2h4m10 0h2m8 0h2m12 0h6m24 0h4m4 0h2m2 0h2m10 0h2m16 0h4m24 0h4m10 0h2m4 0h2m10 0h4m20 0h4m50 0h4m28 0h2m18 0h2m42 0h6m40 0h2m2 0h2m8 0h4m6 0h2m38 0h2m-514 2h4m22 0h2m20 0h2m4 0h4m2 0h2m10 0h2m8 0h2m10 0h4m12 0h2m6 0h2m4 0h6m4 0h2m2 0h4m4 0h2m2 0h2m16 0h4m12 0h2m14 0h2m10 0h4m20 0h2m18 0h2m48 0h2m50 0h2m32 0h2m8 0h4m10 0h2m12 0h2m38 0h2m-472 2h4m40 0h8m2 0h2m6 0h2m6 0h2m6 0h2m2 0h2m10 0h6m6 0h2m8 0h4m4 0h2m6 0h2m4 0h2m26 0h2m4 0h2m16 0h2m18 0h2m20 0h6m64 0h2m88 0h2m8 0h4m6 0h2m54 0h2m-526 2h2m92 0h2m6 0h4m26 0h4m2 0h2m10 0h6m6 0h4m6 0h2m24 0h4m4 0h2m4 0h2m2 0h2m6 0h2m18 0h2m12 0h2m4 0h10m4 0h2m2 0h2m92 0h2m44 0h2m30 0h2m2 0h4m14 0h4m2 0h2m4 0h4m6 0h2m2 0h4m10 0h2m2 0h4m-432 2h2m10 0h4m4 0h4m16 0h2m10 0h2m2 0h8m20 0h4m2 0h8m6 0h4m4 0h6m12 0h4m16 0h2m20 0h4m2 0h6m32 0h2m150 0h4m2 0h2m10 0h2m4 0h8m14 0h2m4 0h2m2 0h10m48 0h2m-484 2h2m12 0h2m6 0h2m6 0h2m22 0h2m6 0h2m24 0h10m4 0h2m24 0h4m18 0h2m4 0h4m34 0h2m18 0h2m4 0h2m144 0h2m8 0h12m4 0h4m2 0h2m14 0h2m6 0h2m2 0h2m-430 2h2m18 0h2m8 0h6m4 0h2m2 0h6m6 0h2m32 0h10m22 0h2m18 0h4m6 0h4m18 0h2m22 0h2m30 0h2m64 0h2m70 0h2m4 0h2m4 0h10m12 0h2m4 0h4m2 0h2m4 0h2m18 0h4m-546 2h2m60 0h2m24 0h4m18 0h2m8 0h4m10 0h6m6 0h2m2 0h2m18 0h2m14 0h2m2 0h4m18 0h2m10 0h6m14 0h2m2 0h4m4 0h2m8 0h4m6 0h2m10 0h2m8 0h2m8 0h2m32 0h2m136 0h6m2 0h4m2 0h6m12 0h4m6 0h6m4 0h2m8 0h2m-456 2h2m2 0h2m18 0h2m2 0h4m10 0h2m6 0h4m44 0h4m30 0h4m2 0h2m28 0h4m2 0h4m10 0h2m12 0h4m16 0h2m4 0h4m54 0h2m18 0h2m6 0h2m46 0h2m26 0h10m2 0h8m4 0h4m8 0h2m6 0h4m-452 2h2m10 0h2m2 0h6m2 0h2m2 0h4m8 0h6m4 0h2m16 0h2m4 0h4m2 0h2m10 0h4m4 0h2m2 0h4m36 0h2m2 0h2m2 0h2m26 0h4m8 0h2m6 0h2m8 0h2m6 0h2m80 0h2m2 0h2m96 0h2m6 0h4m10 0h2m4 0h2m16 0h2m2 0h2m2 0h2m-460 2h2m8 0h2m2 0h2m2 0h8m4 0h4m10 0h4m22 0h2m4 0h2m4 0h4m16 0h4m10 0h6m16 0h4m4 0h2m2 0h4m14 0h4m12 0h6m2 0h4m20 0h2m2 0h4m78 0h2m2 0h2m8 0h2m10 0h2m36 0h2m26 0h2m28 0h10m4 0h4m8 0h2m4 0h4m-450 2h4m4 0h4m2 0h2m2 0h4m20 0h2m6 0h2m12 0h6m36 0h2m8 0h4m2 0h2m8 0h2m6 0h8m12 0h2m4 0h2m6 0h8m16 0h2m12 0h2m2 0h2m78 0h4m8 0h4m6 0h2m86 0h2m2 0h4m8 0h4m8 0h2m2 0h4m2 0h4m-492 2h2m42 0h4m4 0h2m4 0h6m28 0h6m12 0h4m20 0h2m10 0h2m10 0h2m2 0h4m4 0h2m2 0h2m10 0h2m14 0h4m2 0h2m4 0h2m6 0h4m2 0h2m30 0h4m18 0h2m82 0h2m26 0h2m54 0h4m12 0h2m2 0h2m2 0h2m2 0h8m-446 2h2m4 0h4m4 0h2m2 0h4m26 0h2m6 0h2m6 0h2m34 0h2m20 0h2m6 0h2m2 0h2m10 0h2m2 0h2m4 0h2m4 0h6m32 0h2m12 0h4m24 0h2m28 0h2m28 0h2m24 0h2m58 0h2m8 0h2m30 0h8m2 0h4m-442 2h12m2 0h2m24 0h2m2 0h6m10 0h2m24 0h2m6 0h6m10 0h2m16 0h2m12 0h2m2 0h4m32 0h2m18 0h2m10 0h4m22 0h2m58 0h2m72 0h2m8 0h4m42 0h4m2 0h4m-444 2h8m10 0h4m14 0h2m12 0h2m20 0h4m24 0h2m10 0h4m16 0h2m34 0h2m8 0h4m2 0h4m16 0h2m30 0h2m122 0h8m6 0h6m42 0h2m4 0h4m8 0h4m18 0h2m-466 2h4m2 0h2m2 0h2m6 0h2m18 0h2m14 0h4m12 0h4m28 0h2m18 0h2m6 0h2m2 0h2m12 0h2m12 0h2m16 0h2m2 0h4m10 0h2m8 0h8m38 0h2m46 0h2m60 0h2m10 0h6m20 0h2m10 0h2m14 0h2m12 0h2m-522 2h2m76 0h2m18 0h4m6 0h2m18 0h8m2 0h2m2 0h2m32 0h2m6 0h2m4 0h2m8 0h4m2 0h2m14 0h4m22 0h2m12 0h2m6 0h10m4 0h4m6 0h2m2 0h2m2 0h2m2 0h2m40 0h2m28 0h2m8 0h2m18 0h2m28 0h4m14 0h2m20 0h4m10 0h4m26 0h2m-450 2h2m24 0h8m4 0h2m8 0h2m2 0h2m2 0h6m2 0h2m4 0h2m2 0h4m32 0h2m8 0h4m2 0h6m4 0h2m10 0h4m4 0h2m14 0h2m2 0h2m8 0h4m4 0h6m2 0h2m4 0h6m10 0h12m68 0h2m76 0h2m30 0h2m20 0h4m8 0h4m-512 2h2m56 0h4m8 0h2m16 0h2m2 0h10m10 0h8m2 0h2m12 0h2m14 0h8m20 0h4m2 0h8m2 0h4m22 0h4m4 0h2m2 0h2m12 0h2m4 0h2m12 0h4m2 0h2m6 0h6m2 0h4m10 0h2m146 0h2m4 0h2m16 0h2m6 0h2m10 0h6m74 0h2m-508 2h4m2 0h2m4 0h4m30 0h8m6 0h2m18 0h8m12 0h2m2 0h2m16 0h2m2 0h2m22 0h12m10 0h2m2 0h2m12 0h2m10 0h2m10 0h6m14 0h2m18 0h2m24 0h2m102 0h6m12 0h8m2 0h2m12 0h4m-464 2h2m44 0h2m4 0h2m4 0h2m8 0h2m14 0h4m46 0h2m2 0h2m66 0h4m14 0h4m14 0h2m4 0h4m16 0h2m12 0h4m28 0h2m78 0h2m24 0h4m6 0h4m2 0h2m6 0h2m-492 2h2m70 0h2m16 0h4m10 0h4m6 0h2m4 0h4m12 0h2m6 0h2m4 0h6m16 0h2m6 0h2m10 0h2m16 0h2m48 0h2m30 0h8m10 0h2m26 0h2m20 0h2m14 0h4m82 0h2m2 0h6m4 0h2m12 0h4m18 0h4m14 0h2m-490 2h2m26 0h2m14 0h6m2 0h4m2 0h6m10 0h6m12 0h2m8 0h2m4 0h2m4 0h2m4 0h4m4 0h2m12 0h2m4 0h2m16 0h4m22 0h2m24 0h2m14 0h2m16 0h6m36 0h2m40 0h2m84 0h6m2 0h2m2 0h2m22 0h2m4 0h4m2 0h4m14 0h2m-454 2h4m2 0h6m10 0h4m16 0h2m12 0h4m18 0h2m6 0h4m12 0h4m4 0h2m4 0h2m8 0h8m6 0h4m4 0h2m6 0h2m18 0h2m16 0h10m54 0h2m40 0h2m44 0h2m40 0h10m12 0h2m14 0h2m6 0h2m60 0h2m-498 2h2m8 0h2m16 0h4m8 0h2m12 0h4m14 0h8m4 0h6m12 0h2m16 0h2m4 0h2m2 0h6m32 0h2m8 0h6m18 0h2m6 0h2m4 0h2m2 0h4m30 0h2m42 0h2m84 0h4m4 0h4m16 0h4m6 0h2m8 0h2m50 0h2m-552 2h4m64 0h4m6 0h8m8 0h4m18 0h2m2 0h2m10 0h2m6 0h2m2 0h2m14 0h2m12 0h4m14 0h4m4 0h6m8 0h2m22 0h2m4 0h2m4 0h2m2 0h2m10 0h4m12 0h2m2 0h2m8 0h2m52 0h2m8 0h2m16 0h2m2 0h2m56 0h2m18 0h4m16 0h2m8 0h2m58 0h2m-500 2h2m14 0h2m14 0h2m8 0h8m2 0h8m8 0h2m34 0h6m10 0h8m6 0h4m10 0h4m2 0h2m14 0h4m12 0h2m4 0h2m4 0h2m16 0h2m8 0h2m8 0h2m48 0h2m20 0h2m60 0h2m18 0h2m10 0h2m24 0h4m8 0h2m4 0h4m16 0h2m38 0h2m-558 2h2m92 0h2m2 0h2m2 0h6m2 0h2m10 0h2m28 0h2m2 0h4m14 0h2m4 0h2m2 0h2m12 0h4m2 0h4m34 0h6m26 0h4m80 0h2m10 0h2m48 0h2m58 0h2m-388 2h6m4 0h2m2 0h6m4 0h6m14 0h2m12 0h8m10 0h2m26 0h2m22 0h2m16 0h2m24 0h4m4 0h2m2 0h2m8 0h4m116 0h2m44 0h2m2 0h2m18 0h4m16 0h2m-474 2h2m52 0h2m8 0h2m4 0h4m18 0h4m12 0h2m16 0h10m6 0h4m6 0h2m12 0h4m68 0h6m8 0h2m8 0h2m30 0h2m62 0h2m2 0h2m34 0h2m40 0h2m8 0h2m2 0h2m16 0h2m-492 2h2m68 0h8m4 0h2m4 0h2m2 0h4m4 0h2m4 0h8m6 0h4m2 0h4m4 0h4m14 0h4m4 0h4m4 0h2m2 0h2m2 0h2m20 0h2m82 0h4m6 0h4m16 0h2m42 0h2m32 0h4m46 0h2m12 0h6m8 0h2m-466 2h2m66 0h6m10 0h8m22 0h2m4 0h10m16 0h6m10 0h4m8 0h4m6 0h2m8 0h6m20 0h2m24 0h2m30 0h2m72 0h2m8 0h2m70 0h2m6 0h2m2 0h8m8 0h6m58 0h2m-528 2h2m28 0h2m34 0h6m12 0h4m2 0h4m8 0h2m16 0h6m20 0h6m6 0h2m4 0h2m4 0h8m8 0h4m56 0h2m132 0h4m24 0h4m22 0h2m8 0h10m16 0h6m14 0h4m-494 2h2m64 0h2m4 0h2m4 0h2m2 0h6m4 0h2m8 0h6m16 0h2m8 0h2m4 0h4m16 0h4m6 0h2m8 0h12m18 0h2m32 0h6m46 0h2m72 0h2m50 0h4m20 0h2m4 0h2m10 0h4m4 0h2m14 0h2m-484 2h2m62 0h4m10 0h2m16 0h8m6 0h2m6 0h4m6 0h2m2 0h4m26 0h2m2 0h2m6 0h4m4 0h2m24 0h2m10 0h2m18 0h2m38 0h2m36 0h2m22 0h2m14 0h2m4 0h2m50 0h2m12 0h2m18 0h2m4 0h6m4 0h6m12 0h4m-486 2h2m58 0h8m34 0h2m2 0h2m10 0h2m10 0h10m4 0h2m4 0h2m8 0h2m2 0h2m2 0h2m2 0h4m6 0h4m22 0h2m2 0h2m148 0h2m56 0h2m14 0h4m10 0h2m10 0h10m10 0h4m2 0h2m-522 2h2m8 0h2m80 0h8m10 0h4m24 0h2m12 0h4m6 0h6m2 0h6m2 0h2m8 0h2m6 0h2m10 0h2m18 0h4m40 0h2m42 0h2m58 0h2m52 0h2m18 0h2m22 0h6m8 0h2m4 0h8m12 0h2m-508 2h2m82 0h8m12 0h2m4 0h2m10 0h2m10 0h2m10 0h2m6 0h2m6 0h2m30 0h2m12 0h4m96 0h2m4 0h2m52 0h2m52 0h2m26 0h2m6 0h2m6 0h6m12 0h4m16 0h6m-496 2h2m64 0h6m16 0h6m16 0h2m18 0h2m6 0h2m24 0h4m32 0h2m38 0h4m50 0h2m10 0h4m62 0h2m12 0h2m68 0h2m2 0h2m12 0h2m14 0h8m-460 2h2m28 0h4m4 0h2m6 0h2m2 0h6m8 0h2m4 0h6m6 0h2m4 0h2m22 0h2m6 0h6m12 0h2m32 0h4m48 0h2m80 0h2m4 0h2m106 0h2m4 0h2m18 0h2m8 0h2m44 0h2m-466 2h2m14 0h6m2 0h4m10 0h2m4 0h2m4 0h2m22 0h2m6 0h2m12 0h2m10 0h2m26 0h2m36 0h2m40 0h2m18 0h2m64 0h2m54 0h2m2 0h2m26 0h4m2 0h2m8 0h2m-408 2h2m4 0h2m10 0h2m2 0h4m12 0h2m2 0h4m4 0h2m16 0h8m6 0h2m10 0h6m4 0h4m80 0h2m8 0h8m60 0h4m64 0h2m24 0h2m26 0h2m16 0h2m6 0h6m-414 2h4m24 0h2m2 0h2m6 0h4m24 0h2m24 0h10m4 0h2m28 0h2m42 0h2m12 0h4m116 0h2m36 0h4m18 0h2m2 0h2m20 0h2m2 0h2m6 0h2m46 0h2m-472 2h2m6 0h2m10 0h2m16 0h2m4 0h10m14 0h2m34 0h4m14 0h2m16 0h2m34 0h2m20 0h4m2 0h2m176 0h4m30 0h2m10 0h2m38 0h4m-464 2h2m2 0h2m10 0h2m20 0h6m2 0h4m4 0h2m2 0h4m4 0h2m6 0h4m18 0h2m8 0h2m6 0h4m28 0h4m28 0h2m12 0h2m58 0h2m22 0h2m110 0h2m4 0h2m8 0h8m8 0h4m-438 2h8m6 0h10m2 0h2m4 0h2m10 0h2m8 0h2m8 0h2m2 0h2m16 0h6m18 0h2m8 0h2m8 0h2m4 0h2m14 0h2m6 0h4m22 0h4m8 0h2m10 0h2m54 0h2m52 0h2m50 0h2m4 0h2m6 0h2m2 0h4m8 0h2m4 0h4m6 0h2m4 0h2m6 0h6m-434 2h6m2 0h4m2 0h2m2 0h2m16 0h6m22 0h6m16 0h2m2 0h2m4 0h6m66 0h2m2 0h2m6 0h2m2 0h2m6 0h2m6 0h2m58 0h2m84 0h2m12 0h2m4 0h8m30 0h4m6 0h6m10 0h2m12 0h2m26 0h2m18 0h2m-496 2h2m6 0h6m4 0h4m2 0h2m2 0h2m2 0h2m6 0h4m46 0h8m2 0h2m22 0h2m2 0h2m2 0h2m16 0h2m20 0h2m22 0h2m6 0h2m50 0h2m104 0h2m4 0h10m2 0h6m8 0h2m8 0h2m12 0h4m12 0h4m-428 2h2m6 0h2m16 0h6m2 0h2m2 0h2m36 0h2m16 0h8m8 0h2m6 0h2m28 0h2m22 0h2m2 0h6m64 0h2m46 0h2m34 0h2m22 0h2m6 0h4m4 0h10m20 0h2m8 0h2m2 0h2m2 0h2m4 0h4m-452 2h4m16 0h4m2 0h2m4 0h2m12 0h4m8 0h2m2 0h4m26 0h2m2 0h2m6 0h2m2 0h2m10 0h4m6 0h2m102 0h2m12 0h2m62 0h2m4 0h2m32 0h2m22 0h2m10 0h2m4 0h2m4 0h2m6 0h2m12 0h4m2 0h2m6 0h2m10 0h2m-448 2h2m38 0h6m2 0h2m10 0h2m14 0h6m20 0h2m14 0h2m2 0h2m56 0h2m6 0h6m48 0h4m10 0h2m56 0h2m30 0h2m22 0h2m2 0h2m28 0h4m4 0h4m2 0h4m18 0h2m6 0h2m-434 2h2m8 0h2m18 0h6m22 0h8m8 0h2m8 0h4m6 0h2m12 0h2m8 0h4m60 0h2m28 0h2m6 0h2m4 0h2m74 0h4m12 0h2m76 0h2m6 0h2m6 0h2m16 0h4m2 0h2m-438 2h4m6 0h4m4 0h2m2 0h4m8 0h2m16 0h6m2 0h6m8 0h2m2 0h2m2 0h2m2 0h2m2 0h2m16 0h2m8 0h2m50 0h2m132 0h4m18 0h2m6 0h2m40 0h4m32 0h2m18 0h2m-432 2h2m2 0h4m6 0h4m2 0h2m6 0h4m6 0h2m14 0h2m4 0h2m14 0h8m8 0h4m32 0h4m4 0h2m4 0h2m42 0h2m64 0h2m42 0h2m6 0h2m2 0h2m64 0h6m46 0h2m-410 2h2m18 0h8m10 0h4m22 0h4m8 0h2m18 0h2m18 0h2m12 0h2m28 0h2m8 0h2m14 0h2m94 0h2m4 0h4m60 0h2m2 0h2m2 0h6m4 0h2m4 0h2m14 0h4m10 0h2m-432 2h2m16 0h2m2 0h4m18 0h4m38 0h4m10 0h2m2 0h2m34 0h4m12 0h2m28 0h2m108 0h2m48 0h2m34 0h8m4 0h2m10 0h2m2 0h2m2 0h8m6 0h4m-414 2h4m2 0h12m6 0h2m2 0h2m2 0h4m12 0h2m2 0h2m14 0h4m30 0h2m144 0h2m4 0h6m20 0h2m38 0h2m2 0h2m44 0h2m-390 2h2m4 0h2m4 0h4m2 0h4m8 0h4m8 0h2m4 0h6m14 0h2m38 0h2m8 0h4m6 0h2m32 0h2m94 0h2m8 0h2m56 0h2m14 0h2m4 0h2m48 0h2m2 0h2m-398 2h4m4 0h2m2 0h2m8 0h4m2 0h2m8 0h2m2 0h4m24 0h2m2 0h4m4 0h2m6 0h4m18 0h2m26 0h2m16 0h2m20 0h2m24 0h2m32 0h2m8 0h2m48 0h2m12 0h4m52 0h4m2 0h4m8 0h2m4 0h10m22 0h2m28 0h2m18 0h2m-476 2h4m2 0h4m8 0h4m6 0h2m14 0h2m4 0h2m2 0h2m22 0h2m8 0h2m18 0h2m6 0h2m18 0h4m42 0h4m6 0h4m6 0h2m44 0h2m8 0h8m36 0h2m2 0h2m22 0h2m2 0h2m20 0h2m6 0h2m2 0h2m6 0h2m4 0h2m8 0h8m10 0h2m12 0h2m12 0h2m-444 2h12m22 0h2m12 0h4m8 0h2m16 0h2m20 0h4m6 0h4m8 0h2m18 0h2m42 0h2m4 0h8m34 0h6m10 0h2m8 0h6m104 0h2m8 0h2m12 0h8m6 0h4m16 0h4m-432 2h14m2 0h4m2 0h4m8 0h2m6 0h2m4 0h6m6 0h2m10 0h2m4 0h4m16 0h4m134 0h4m36 0h4m48 0h2m16 0h2m28 0h4m14 0h4m2 0h4m6 0h2m16 0h4m-446 2h2m14 0h2m4 0h10m2 0h2m8 0h4m8 0h4m4 0h4m2 0h6m4 0h2m2 0h2m2 0h2m8 0h2m8 0h2m10 0h2m24 0h2m14 0h2m58 0h2m26 0h4m20 0h2m10 0h2m2 0h2m40 0h2m28 0h2m56 0h6m16 0h2m-446 2h2m18 0h2m10 0h2m26 0h2m4 0h6m2 0h6m4 0h2m6 0h2m6 0h2m4 0h4m2 0h2m10 0h10m2 0h2m8 0h2m14 0h2m24 0h2m34 0h4m38 0h2m8 0h2m8 0h2m36 0h2m30 0h2m44 0h2m18 0h6m12 0h2m4 0h2m-450 2h2m10 0h8m8 0h2m6 0h4m8 0h2m30 0h4m2 0h4m12 0h4m2 0h4m4 0h2m2 0h2m4 0h8m16 0h4m72 0h2m28 0h6m6 0h2m18 0h2m10 0h4m100 0h4m36 0h2m-446 2h2m8 0h2m2 0h2m20 0h8m4 0h4m20 0h2m6 0h6m16 0h4m10 0h2m2 0h2m2 0h4m2 0h2m10 0h2m34 0h2m84 0h2m4 0h2m30 0h2m30 0h2m14 0h2m34 0h2m12 0h6m2 0h4m4 0h4m2 0h4m18 0h2m-436 2h2m14 0h4m4 0h6m8 0h2m4 0h2m4 0h2m10 0h2m8 0h2m2 0h2m24 0h10m6 0h6m42 0h2m16 0h2m26 0h2m44 0h2m66 0h2m14 0h2m44 0h4m2 0h2m24 0h4m10 0h2m-432 2h2m8 0h8m2 0h2m12 0h2m2 0h6m2 0h2m12 0h2m2 0h8m10 0h4m4 0h2m6 0h2m2 0h12m2 0h2m90 0h2m20 0h2m38 0h2m34 0h2m78 0h8m20 0h6m20 0h2m2 0h2m-444 2h2m12 0h2m16 0h8m10 0h4m2 0h4m4 0h6m2 0h2m4 0h4m4 0h2m2 0h2m6 0h2m2 0h6m6 0h2m14 0h2m72 0h2m14 0h2m30 0h2m54 0h2m22 0h2m14 0h4m36 0h8m16 0h6m6 0h2m6 0h2m6 0h6m-416 2h6m10 0h4m20 0h6m2 0h2m22 0h2m4 0h2m14 0h4m2 0h2m14 0h2m46 0h6m20 0h4m12 0h2m106 0h4m4 0h2m12 0h2m8 0h2m2 0h6m4 0h2m4 0h2m14 0h6m4 0h2m16 0h6m6 0h2m16 0h2m-460 2h2m18 0h4m10 0h4m12 0h2m4 0h6m4 0h4m32 0h2m2 0h2m6 0h2m16 0h4m72 0h2m22 0h2m20 0h2m18 0h2m20 0h2m32 0h4m4 0h2m2 0h2m38 0h2m18 0h6m2 0h6m10 0h2m4 0h2m38 0h2m-480 2h4m10 0h4m16 0h2m20 0h2m4 0h6m4 0h4m2 0h2m10 0h2m46 0h2m48 0h2m44 0h2m44 0h2m4 0h2m6 0h2m50 0h2m42 0h2m18 0h12m16 0h2m6 0h2m8 0h2m-456 2h2m2 0h8m2 0h2m30 0h2m12 0h4m8 0h2m4 0h6m24 0h2m10 0h2m14 0h2m4 0h2m42 0h4m6 0h2m30 0h4m46 0h6m96 0h2m14 0h2m6 0h2m4 0h10m14 0h2m6 0h2m2 0h2m-444 2h2m6 0h2m18 0h2m10 0h2m2 0h6m18 0h6m26 0h2m30 0h2m4 0h4m38 0h2m8 0h2m2 0h2m14 0h2m14 0h4m104 0h2m22 0h2m12 0h10m6 0h2m8 0h4m4 0h2m8 0h4m18 0h4m-456 2h2m32 0h4m16 0h2m4 0h6m8 0h2m6 0h6m28 0h2m2 0h6m12 0h2m22 0h4m28 0h2m28 0h2m16 0h2m28 0h2m30 0h2m62 0h4m14 0h6m4 0h4m2 0h2m10 0h4m2 0h2m6 0h6m18 0h2m-420 2h2m6 0h2m2 0h4m2 0h4m4 0h6m8 0h4m6 0h4m16 0h6m4 0h2m18 0h8m4 0h2m14 0h4m8 0h6m42 0h2m4 0h2m56 0h4m8 0h2m24 0h2m4 0h2m46 0h2m18 0h16m14 0h2m2 0h2m12 0h2m-414 2h4m14 0h4m6 0h4m4 0h6m6 0h4m2 0h2m12 0h2m26 0h2m6 0h2m2 0h2m18 0h8m2 0h2m2 0h2m16 0h2m2 0h4m18 0h2m6 0h2m2 0h2m60 0h2m2 0h8m24 0h2m10 0h2m34 0h2m6 0h2m2 0h2m8 0h6m2 0h6m2 0h2m28 0h8m4 0h2m-388 2h4m4 0h6m2 0h4m42 0h2m18 0h2m6 0h4m4 0h2m2 0h8m4 0h2m10 0h2m18 0h4m28 0h2m42 0h6m2 0h6m16 0h2m10 0h2m48 0h4m22 0h8m4 0h4m6 0h2m4 0h2m4 0h6m-460 2h2m46 0h2m4 0h6m12 0h4m2 0h6m10 0h6m34 0h2m4 0h2m2 0h2m4 0h4m8 0h4m2 0h2m20 0h2m34 0h4m38 0h2m10 0h2m24 0h4m2 0h2m54 0h2m4 0h2m18 0h2m16 0h2m10 0h2m8 0h2m8 0h2m2 0h10m38 0h2m-498 2h4m46 0h2m4 0h6m2 0h2m8 0h4m2 0h2m2 0h2m10 0h4m4 0h4m26 0h8m20 0h2m6 0h6m50 0h2m22 0h2m46 0h2m4 0h8m62 0h2m36 0h4m32 0h6m-410 2h2m6 0h6m4 0h6m36 0h6m20 0h10m20 0h8m4 0h4m34 0h2m32 0h2m6 0h8m12 0h2m14 0h2m36 0h2m46 0h2m14 0h2m6 0h2m8 0h6m22 0h6m6 0h2m2 0h4m6 0h2m-420 2h2m6 0h4m2 0h2m6 0h6m10 0h2m14 0h4m4 0h4m14 0h2m10 0h6m22 0h2m4 0h4m18 0h4m12 0h2m24 0h4m14 0h2m10 0h4m8 0h2m18 0h2m8 0h4m4 0h4m8 0h4m36 0h2m18 0h2m4 0h2m4 0h4m8 0h6m6 0h2m36 0h2m8 0h2m6 0h2m-434 2h2m4 0h6m6 0h8m10 0h2m14 0h2m16 0h2m2 0h6m10 0h8m38 0h2m2 0h8m8 0h2m12 0h2m24 0h2m22 0h2m6 0h4m6 0h2m8 0h2m10 0h2m2 0h2m4 0h2m6 0h6m20 0h2m22 0h4m22 0h6m8 0h2m8 0h8m12 0h4m30 0h2m-434 2h2m6 0h2m10 0h2m20 0h4m36 0h2m4 0h12m28 0h2m6 0h2m6 0h4m8 0h2m12 0h4m94 0h2m8 0h6m16 0h4m20 0h2m2 0h2m12 0h2m10 0h4m14 0h2m4 0h6m2 0h2m4 0h6m18 0h2m30 0h2m-450 2h2m2 0h2m4 0h4m14 0h4m4 0h2m4 0h4m18 0h2m18 0h2m2 0h2m12 0h2m12 0h2m2 0h2m4 0h4m14 0h2m24 0h2m6 0h6m2 0h2m6 0h2m82 0h14m20 0h4m6 0h6m22 0h2m4 0h2m6 0h2m4 0h4m6 0h2m6 0h2m-440 2h2m14 0h2m42 0h2m16 0h4m12 0h2m8 0h4m4 0h6m8 0h2m14 0h4m4 0h4m18 0h2m4 0h2m36 0h2m4 0h2m4 0h2m26 0h2m6 0h2m70 0h2m24 0h4m18 0h2m20 0h2m4 0h2m6 0h2m8 0h4m4 0h2m4 0h2m2 0h2m-438 2h2m36 0h2m2 0h2m16 0h2m2 0h2m18 0h2m4 0h8m28 0h2m2 0h2m6 0h2m2 0h2m4 0h2m8 0h6m12 0h2m46 0h4m24 0h2m14 0h4m4 0h2m2 0h2m4 0h2m22 0h4m28 0h2m26 0h2m16 0h2m84 0h2m-432 2h2m10 0h2m2 0h4m8 0h4m6 0h4m4 0h2m18 0h4m16 0h4m4 0h2m16 0h2m2 0h4m4 0h2m6 0h2m26 0h6m12 0h4m20 0h2m20 0h4m4 0h6m26 0h4m40 0h2m2 0h2m12 0h2m10 0h2m4 0h6m10 0h2m14 0h4m-382 2h4m10 0h4m8 0h2m2 0h2m4 0h8m14 0h2m4 0h2m2 0h10m4 0h2m8 0h6m10 0h2m2 0h2m4 0h2m6 0h2m4 0h2m28 0h2m40 0h2m8 0h2m20 0h4m26 0h2m50 0h2m6 0h4m22 0h2m6 0h2m10 0h2m4 0h2m-384 2h2m2 0h8m32 0h2m8 0h6m8 0h16m2 0h2m12 0h2m8 0h6m12 0h2m6 0h2m36 0h2m38 0h4m24 0h2m138 0h2m-388 2h2m8 0h2m2 0h4m2 0h2m10 0h2m14 0h2m6 0h8m2 0h4m2 0h12m2 0h8m2 0h2m6 0h2m10 0h6m8 0h2m8 0h2m6 0h2m12 0h2m44 0h2m30 0h2m28 0h2m36 0h2m76 0h2m-380 2h8m8 0h4m2 0h6m24 0h6m4 0h2m8 0h6m10 0h2m22 0h2m8 0h2m12 0h2m6 0h2m8 0h2m144 0h2m20 0h2m92 0h2m-428 2h2m2 0h2m2 0h10m2 0h2m4 0h12m12 0h2m6 0h2m4 0h4m12 0h2m4 0h4m12 0h6m8 0h4m18 0h2m4 0h2m4 0h6m2 0h2m2 0h2m96 0h2m54 0h2m12 0h4m34 0h2m-368 2h2m6 0h4m14 0h12m10 0h4m14 0h2m2 0h6m8 0h4m12 0h4m6 0h8m2 0h4m2 0h4m2 0h4m2 0h2m8 0h4m4 0h2m34 0h2m48 0h2m16 0h2m18 0h2m46 0h4m24 0h2m46 0h2m-444 2h2m30 0h2m4 0h4m6 0h2m14 0h2m6 0h6m18 0h2m10 0h2m14 0h2m4 0h2m20 0h2m4 0h6m6 0h4m2 0h4m6 0h4m2 0h2m18 0h2m14 0h10m14 0h2m16 0h4m8 0h2m2 0h2m30 0h4m-278 2h6m18 0h2m14 0h10m22 0h2m22 0h2m12 0h2m2 0h6m18 0h6m28 0h2m12 0h2m4 0h2m4 0h2m2 0h2m40 0h10m20 0h6m6 0h2m48 0h2m88 0h2m-460 2h2m22 0h2m4 0h6m8 0h2m2 0h2m22 0h2m4 0h4m8 0h4m4 0h2m2 0h4m6 0h6m6 0h2m8 0h4m2 0h4m2 0h4m4 0h2m14 0h4m20 0h2m30 0h2m8 0h2m10 0h2m4 0h2m18 0h2m10 0h4m2 0h2m6 0h6m4 0h4m2 0h2m22 0h2m28 0h2m86 0h2m-442 2h2m4 0h2m2 0h2m18 0h2m10 0h2m14 0h6m12 0h4m4 0h6m6 0h4m16 0h6m6 0h8m14 0h2m26 0h2m12 0h2m24 0h4m8 0h2m2 0h2m20 0h2m18 0h4m20 0h2m16 0h2m56 0h2m44 0h2m16 0h2m-444 2h2m8 0h6m12 0h4m12 0h4m14 0h2m16 0h4m2 0h2m4 0h4m4 0h2m2 0h2m12 0h4m4 0h10m8 0h2m6 0h2m20 0h2m4 0h4m20 0h2m14 0h2m56 0h2m12 0h2m4 0h2m82 0h4m4 0h2m30 0h2m-424 2h2m24 0h4m4 0h2m8 0h6m10 0h6m32 0h2m2 0h2m14 0h2m8 0h8m6 0h2m8 0h2m16 0h2m8 0h4m10 0h2m6 0h4m16 0h4m12 0h2m58 0h4m2 0h2m12 0h2m42 0h2m4 0h2m8 0h6m-384 2h2m32 0h6m2 0h8m12 0h6m12 0h2m4 0h4m8 0h2m2 0h2m6 0h2m10 0h2m2 0h4m4 0h2m8 0h2m8 0h4m20 0h6m10 0h2m8 0h2m16 0h4m26 0h2m24 0h2m18 0h6m2 0h2m24 0h2m18 0h2m6 0h6m10 0h2m6 0h2m8 0h2m-372 2h8m6 0h4m4 0h4m8 0h2m8 0h4m10 0h8m18 0h2m12 0h4m2 0h6m10 0h2m30 0h2m2 0h2m28 0h2m6 0h2m32 0h2m34 0h2m8 0h2m2 0h4m14 0h2m20 0h2m8 0h2m6 0h6m4 0h6m18 0h4m-398 2h4m34 0h2m6 0h2m8 0h4m6 0h6m12 0h6m16 0h2m24 0h4m42 0h4m10 0h2m16 0h2m4 0h4m12 0h6m46 0h4m8 0h4m8 0h4m38 0h4m8 0h2m4 0h2m4 0h2m20 0h2m-392 2h12m28 0h4m8 0h2m4 0h2m6 0h2m4 0h2m2 0h2m18 0h2m20 0h4m50 0h4m4 0h2m20 0h4m24 0h4m20 0h2m26 0h2m14 0h2m24 0h2m20 0h2m6 0h2m6 0h2m4 0h4m52 0h2m-426 2h2m6 0h4m2 0h2m12 0h2m8 0h2m18 0h4m4 0h4m2 0h2m2 0h2m18 0h2m6 0h2m14 0h2m88 0h4m38 0h2m46 0h4m2 0h2m44 0h2m10 0h4m-386 2h2m18 0h4m2 0h4m16 0h6m4 0h2m18 0h4m4 0h8m2 0h6m10 0h4m6 0h2m16 0h2m10 0h2m6 0h2m2 0h2m4 0h2m12 0h2m32 0h4m2 0h2m40 0h2m10 0h2m12 0h2m10 0h2m12 0h8m2 0h2m50 0h6m2 0h4m-390 2h2m18 0h2m6 0h2m14 0h2m4 0h8m2 0h2m2 0h2m6 0h2m4 0h2m2 0h10m4 0h2m2 0h2m6 0h8m20 0h2m4 0h2m6 0h2m4 0h4m4 0h4m34 0h2m12 0h6m6 0h2m32 0h2m12 0h4m4 0h2m32 0h2m18 0h4m22 0h2m6 0h2m6 0h2m2 0h4m24 0h2m-404 2h6m22 0h4m4 0h2m4 0h2m6 0h2m14 0h12m8 0h6m6 0h2m2 0h4m2 0h2m14 0h8m2 0h2m4 0h2m14 0h4m18 0h2m2 0h2m24 0h2m28 0h2m10 0h4m8 0h4m54 0h2m6 0h2m32 0h2m36 0h4m-410 2h2m12 0h2m16 0h4m4 0h4m2 0h4m16 0h2m6 0h8m2 0h2m12 0h6m6 0h6m18 0h6m6 0h2m10 0h8m18 0h2m4 0h2m48 0h6m22 0h12m42 0h8m4 0h2m6 0h2m120 0h2m-460 2h2m4 0h6m8 0h2m6 0h8m2 0h4m4 0h2m12 0h2m6 0h2m2 0h8m22 0h6m16 0h2m22 0h2m4 0h2m22 0h4m12 0h6m4 0h2m58 0h4m8 0h2m26 0h2m10 0h10m10 0h4m4 0h2m2 0h2m8 0h4m34 0h2m-400 2h6m2 0h4m14 0h2m2 0h6m8 0h2m2 0h10m10 0h2m4 0h10m2 0h2m6 0h2m4 0h2m2 0h6m12 0h6m26 0h2m2 0h2m12 0h2m4 0h6m2 0h2m6 0h2m30 0h2m38 0h4m6 0h2m2 0h2m24 0h2m30 0h2m2 0h6m2 0h2m-352 2h14m6 0h2m2 0h6m2 0h4m2 0h2m8 0h2m16 0h8m4 0h4m4 0h2m18 0h4m14 0h4m42 0h2m14 0h8m30 0h4m8 0h2m4 0h2m22 0h6m8 0h4m4 0h2m12 0h8m28 0h2m2 0h4m24 0h2m40 0h2m-414 2h14m6 0h4m26 0h2m4 0h2m10 0h2m2 0h2m12 0h2m6 0h4m2 0h4m2 0h2m4 0h4m10 0h4m4 0h4m14 0h2m2 0h6m24 0h8m4 0h2m26 0h2m10 0h2m40 0h2m10 0h2m8 0h4m26 0h2m4 0h2m28 0h2m6 0h4m16 0h2m-398 2h2m2 0h10m10 0h2m22 0h2m4 0h4m12 0h4m24 0h2m2 0h2m28 0h2m2 0h2m2 0h2m14 0h4m24 0h2m2 0h4m2 0h2m20 0h4m6 0h2m16 0h2m54 0h6m18 0h2m6 0h2m8 0h2m2 0h4m26 0h2m-404 2h2m30 0h2m16 0h2m4 0h2m4 0h2m10 0h2m4 0h6m24 0h2m16 0h2m8 0h2m10 0h2m6 0h8m2 0h2m6 0h2m2 0h4m32 0h2m4 0h2m2 0h2m16 0h6m36 0h2m2 0h6m18 0h6m22 0h2m4 0h4m22 0h2m-376 2h4m8 0h2m24 0h4m48 0h2m20 0h2m12 0h4m2 0h4m2 0h2m6 0h2m8 0h2m2 0h2m20 0h2m8 0h4m24 0h6m22 0h6m32 0h8m48 0h2m4 0h2m28 0h2m10 0h2m46 0h2m-404 2h4m2 0h2m2 0h2m10 0h2m14 0h2m8 0h2m4 0h2m14 0h10m2 0h2m4 0h2m2 0h2m2 0h6m2 0h2m4 0h6m2 0h4m14 0h2m38 0h2m16 0h4m36 0h2m18 0h2m62 0h2m32 0h2m24 0h2m-386 2h4m2 0h4m2 0h6m10 0h2m4 0h2m12 0h2m4 0h2m4 0h2m6 0h2m14 0h2m4 0h8m6 0h2m6 0h2m2 0h8m8 0h2m6 0h2m4 0h2m4 0h2m36 0h2m8 0h4m16 0h2m12 0h2m4 0h2m18 0h2m60 0h2m-320 2h4m2 0h8m2 0h2m8 0h6m8 0h2m2 0h2m2 0h4m2 0h4m6 0h2m20 0h2m4 0h2m4 0h4m4 0h2m2 0h2m8 0h2m12 0h2m4 0h8m16 0h2m28 0h4m16 0h10m6 0h2m52 0h2m98 0h2m-428 2h2m40 0h2m2 0h8m4 0h2m10 0h2m24 0h4m10 0h2m4 0h2m16 0h2m4 0h4m14 0h4m16 0h2m4 0h2m2 0h4m20 0h2m22 0h2m26 0h4m14 0h2m40 0h2m16 0h6m78 0h2m-386 2h2m20 0h2m2 0h6m6 0h2m6 0h4m4 0h4m40 0h2m20 0h2m2 0h4m4 0h2m6 0h6m24 0h2m18 0h2m16 0h2m14 0h2m12 0h2m10 0h6m82 0h4m8 0h2m28 0h2m2 0h2m18 0h2m-406 2h4m14 0h4m6 0h4m2 0h10m6 0h4m2 0h2m8 0h6m2 0h2m8 0h4m10 0h4m12 0h2m2 0h4m4 0h6m4 0h12m12 0h6m42 0h2m16 0h2m2 0h2m6 0h2m14 0h8m8 0h4m14 0h2m50 0h4m-342 2h2m16 0h2m4 0h4m2 0h10m12 0h2m14 0h2m12 0h4m12 0h2m16 0h2m6 0h4m2 0h6m6 0h4m14 0h4m62 0h2m4 0h2m18 0h8m24 0h2m22 0h4m2 0h2m36 0h4m-356 2h2m14 0h2m6 0h6m4 0h2m4 0h2m14 0h2m12 0h2m12 0h4m2 0h2m6 0h2m14 0h2m18 0h2m4 0h8m10 0h4m22 0h2m22 0h2m38 0h4m2 0h6m14 0h2m18 0h4m10 0h2m2 0h2m2 0h2m6 0h2m12 0h4m8 0h6m12 0h4m64 0h2m-422 2h2m6 0h8m2 0h2m38 0h2m8 0h8m4 0h2m20 0h2m24 0h2m28 0h4m22 0h2m6 0h2m14 0h2m2 0h2m14 0h2m4 0h2m40 0h6m24 0h6m6 0h6m2 0h2m8 0h4m2 0h2m8 0h4m-356 2h2m2 0h2m4 0h4m12 0h2m8 0h2m6 0h2m10 0h2m16 0h2m4 0h8m2 0h2m2 0h2m2 0h2m16 0h2m30 0h4m8 0h2m10 0h4m4 0h2m2 0h2m6 0h2m20 0h4m2 0h2m2 0h2m2 0h14m4 0h2m4 0h6m18 0h8m2 0h2m2 0h2m2 0h2m2 0h2m12 0h2m4 0h6m12 0h2m10 0h4m-346 2h6m2 0h4m14 0h2m2 0h4m2 0h4m2 0h2m26 0h2m2 0h12m22 0h6m28 0h4m20 0h2m6 0h4m34 0h8m10 0h4m6 0h6m4 0h2m18 0h2m4 0h4m2 0h2m8 0h2m20 0h4m12 0h4m8 0h4m-348 2h4m2 0h6m6 0h6m14 0h2m2 0h4m12 0h2m10 0h4m2 0h8m2 0h4m22 0h2m12 0h2m4 0h2m6 0h2m4 0h2m46 0h2m6 0h6m8 0h4m20 0h2m12 0h2m22 0h8m4 0h2m2 0h2m14 0h2m4 0h4m4 0h4m-340 2h4m4 0h4m2 0h12m4 0h2m2 0h4m10 0h10m10 0h2m18 0h8m28 0h6m6 0h4m6 0h2m70 0h4m4 0h4m12 0h4m24 0h2m10 0h2m6 0h12m6 0h2m12 0h2m6 0h2m6 0h4m-340 2h2m4 0h2m6 0h2m4 0h4m10 0h4m6 0h10m2 0h2m22 0h4m2 0h6m24 0h4m4 0h6m8 0h4m18 0h2m14 0h2m24 0h2m12 0h2m22 0h4m18 0h4m4 0h2m20 0h2m6 0h2m18 0h2m4 0h4m-328 2h6m2 0h2m10 0h2m10 0h2m8 0h8m12 0h4m2 0h2m2 0h6m8 0h2m2 0h2m10 0h4m10 0h4m44 0h8m12 0h4m2 0h2m18 0h2m30 0h2m2 0h2m6 0h6m8 0h2m10 0h2m20 0h4m2 0h2m4 0h4m16 0h4m-336 2h2m2 0h2m2 0h6m2 0h4m18 0h2m8 0h6m8 0h2m8 0h4m24 0h4m6 0h6m2 0h6m38 0h4m14 0h12m16 0h2m20 0h2m24 0h2m18 0h2m2 0h2m18 0h2m2 0h6m2 0h4m44 0h2m-360 2h4m2 0h12m16 0h8m4 0h4m2 0h2m2 0h2m6 0h4m26 0h2m12 0h6m4 0h6m12 0h2m36 0h6m2 0h8m2 0h2m44 0h2m4 0h2m46 0h6m20 0h2m6 0h4m24 0h2m-388 2h2m20 0h4m12 0h2m2 0h4m2 0h2m6 0h2m4 0h6m12 0h10m8 0h2m20 0h2m4 0h6m2 0h2m4 0h8m4 0h4m4 0h2m2 0h4m8 0h2m8 0h2m2 0h6m2 0h2m2 0h20m2 0h6m10 0h2m48 0h4m34 0h2m2 0h4m-294 2h6m4 0h6m4 0h6m8 0h2m2 0h2m28 0h4m12 0h4m4 0h2m4 0h14m6 0h2m2 0h4m16 0h16m2 0h34m4 0h2m22 0h2m14 0h2m8 0h8m4 0h2m12 0h4m6 0h10m2 0h2m4 0h4m12 0h2m-322 2h4m2 0h4m2 0h2m10 0h2m8 0h4m2 0h2m8 0h2m6 0h2m2 0h2m22 0h6m2 0h2m4 0h6m2 0h6m2 0h2m6 0h4m8 0h2m2 0h6m4 0h12m2 0h24m4 0h4m2 0h4m36 0h4m8 0h6m4 0h4m20 0h2m8 0h6m6 0h2m-302 2h4m16 0h2m4 0h6m10 0h2m26 0h6m2 0h2m8 0h4m2 0h2m34 0h20m2 0h20m2 0h26m38 0h2m2 0h12m10 0h2m10 0h2m4 0h2m4 0h4m8 0h2m8 0h2m-310 2h2m16 0h4m2 0h2m12 0h2m2 0h4m4 0h4m12 0h2m4 0h6m46 0h4m4 0h16m2 0h48m42 0h2m4 0h4m12 0h6m2 0h4m4 0h6m12 0h2m-278 2h4m18 0h12m20 0h2m4 0h2m22 0h4m16 0h4m4 0h2m6 0h56m38 0h4m8 0h2m6 0h2m4 0h6m2 0h6m6 0h2m10 0h2m-288 2h6m8 0h2m20 0h2m2 0h6m24 0h2m2 0h2m8 0h2m8 0h2m4 0h2m12 0h4m2 0h12m2 0h2m2 0h20m4 0h8m2 0h8m4 0h10m2 0h4m10 0h2m12 0h4m2 0h2m16 0h4m6 0h2m2 0h6m30 0h4m-300 2h2m6 0h6m6 0h4m8 0h4m44 0h6m2 0h2m2 0h4m2 0h10m4 0h2m4 0h12m4 0h46m2 0h18m20 0h2m4 0h2m18 0h6m2 0h2m4 0h6m-328 2h2m72 0h2m52 0h2m16 0h4m10 0h2m10 0h22m4 0h30m2 0h10m2 0h2m4 0h10m2 0h8m2 0h4m2 0h2m14 0h2m8 0h2m54 0h2m-358 2h2m72 0h2m32 0h2m8 0h2m24 0h4m22 0h40m2 0h16m2 0h22m2 0h2m2 0h10m4 0h6m12 0h2m22 0h2m30 0h2m6 0h2m6 0h2m-364 2h2m102 0h4m2 0h2m34 0h2m20 0h16m4 0h78m2 0h12m10 0h2m8 0h2m10 0h8m6 0h4m4 0h4m24 0h2m-370 2h2m76 0h6m14 0h2m12 0h2m8 0h8m2 0h2m16 0h4m20 0h2m2 0h4m2 0h6m2 0h2m4 0h20m2 0h8m2 0h2m6 0h50m18 0h2m8 0h12m12 0h2m8 0h2m-278 2h2m4 0h2m8 0h2m22 0h2m8 0h2m4 0h2m4 0h2m10 0h6m8 0h2m8 0h10m2 0h10m2 0h30m2 0h2m2 0h2m4 0h36m2 0h8m24 0h2m2 0h2m2 0h2m2 0h6m6 0h2m2 0h2m-250 2h2m10 0h2m10 0h2m14 0h2m8 0h2m2 0h2m2 0h2m2 0h2m4 0h2m4 0h2m10 0h8m2 0h8m2 0h4m2 0h4m2 0h6m2 0h4m2 0h14m4 0h2m2 0h14m4 0h14m2 0h8m12 0h2m14 0h6m6 0h2m2 0h2m2 0h2m6 0h2m-268 2h8m8 0h2m40 0h2m16 0h4m2 0h2m4 0h2m10 0h26m4 0h16m2 0h16m2 0h40m10 0h4m2 0h2m18 0h4m6 0h4m32 0h2m-284 2h8m2 0h2m6 0h2m2 0h2m6 0h2m38 0h2m22 0h60m8 0h36m4 0h16m8 0h2m8 0h4m6 0h2m24 0h2m-268 2h2m2 0h2m8 0h4m2 0h2m22 0h2m16 0h2m18 0h4m2 0h16m2 0h4m2 0h6m2 0h28m6 0h2m2 0h26m4 0h4m4 0h16m8 0h2m8 0h6m4 0h6m22 0h2m-356 2h2m20 0h2m18 0h2m44 0h2m10 0h4m40 0h2m22 0h2m2 0h2m4 0h10m4 0h2m8 0h14m2 0h4m4 0h10m2 0h4m6 0h20m4 0h8m2 0h12m12 0h2m18 0h2m28 0h2m-358 2h4m56 0h2m28 0h4m4 0h4m4 0h2m8 0h2m12 0h6m8 0h2m24 0h2m4 0h8m2 0h4m4 0h2m4 0h20m8 0h12m8 0h32m2 0h8m2 0h4m10 0h2m16 0h2m16 0h6m-344 2h2m76 0h2m14 0h4m6 0h2m2 0h4m12 0h4m32 0h4m10 0h2m2 0h10m2 0h44m6 0h10m4 0h28m2 0h2m4 0h4m14 0h10m2 0h2m6 0h4m8 0h2m4 0h2m-364 2h2m20 0h2m70 0h2m14 0h4m6 0h2m30 0h2m22 0h2m30 0h16m2 0h20m2 0h4m2 0h2m4 0h20m4 0h2m2 0h2m4 0h14m20 0h2m4 0h2m2 0h6m2 0h2m12 0h2m28 0h4m-364 2h2m26 0h2m48 0h4m32 0h2m26 0h2m2 0h8m24 0h4m6 0h18m2 0h2m2 0h14m2 0h34m2 0h6m2 0h8m4 0h2m4 0h4m4 0h4m2 0h2m6 0h4m12 0h4m52 0h4m-378 2h4m76 0h2m6 0h2m8 0h4m38 0h4m26 0h32m4 0h18m2 0h14m2 0h8m4 0h18m2 0h2m4 0h6m8 0h2m4 0h2m18 0h6m48 0h4m-378 2h4m56 0h2m2 0h2m6 0h2m24 0h2m2 0h2m2 0h4m12 0h2m16 0h2m22 0h2m6 0h4m6 0h20m2 0h20m4 0h8m2 0h6m4 0h2m2 0h22m48 0h4m-334 2h2m64 0h4m10 0h4m20 0h2m2 0h10m4 0h2m24 0h2m28 0h10m2 0h38m2 0h4m2 0h2m10 0h4m4 0h2m2 0h12m18 0h6m52 0h2m-352 2h2m64 0h4m10 0h2m2 0h2m6 0h4m16 0h4m16 0h4m18 0h2m14 0h2m4 0h2m6 0h2m8 0h2m2 0h30m4 0h6m2 0h4m2 0h10m2 0h16m4 0h2m16 0h2m18 0h2m6 0h6m-330 2h4m62 0h4m8 0h2m2 0h2m6 0h2m42 0h2m16 0h4m16 0h6m10 0h2m10 0h4m2 0h8m2 0h10m2 0h2m4 0h2m6 0h6m2 0h24m4 0h6m12 0h4m4 0h2m18 0h2m16 0h2m-318 2h2m80 0h2m44 0h2m12 0h2m28 0h4m6 0h8m4 0h2m4 0h2m2 0h2m2 0h6m4 0h20m2 0h8m6 0h2m28 0h2m4 0h2m38 0h2m-366 2h2m156 0h4m44 0h2m2 0h2m4 0h4m4 0h6m2 0h2m4 0h10m2 0h2m4 0h14m18 0h2m32 0h2m-320 2h2m16 0h2m114 0h2m10 0h2m64 0h2m8 0h26m2 0h10m10 0h4m8 0h8m10 0h2m64 0h2m-230 2h2m2 0h2m2 0h2m36 0h2m40 0h10m2 0h10m4 0h2m34 0h2m12 0h6m4 0h2m6 0h2m-202 2h4m50 0h2m4 0h2m24 0h2m20 0h22m38 0h2m6 0h2m4 0h2m2 0h2m12 0h2m12 0h2m-338 2h2m26 0h4m66 0h2m24 0h4m106 0h2m6 0h10m4 0h2m6 0h2m24 0h4m6 0h6m6 0h4m6 0h2m66 0h4m-366 2h2m88 0h8m106 0h6m6 0h6m4 0h2m2 0h2m2 0h2m38 0h2m-184 2h4m6 0h2m20 0h2m70 0h2m8 0h6m6 0h2m4 0h2m20 0h4m-160 2h4m16 0h2m12 0h4m64 0h2m8 0h8m4 0h2m10 0h2m-120 2h6m2 0h2m4 0h4m18 0h2m46 0h4m10 0h2m8 0h2m4 0h2m14 0h2m26 0h2m-174 2h2m12 0h2m12 0h4m6 0h4m14 0h2m26 0h2m10 0h4m14 0h2m10 0h2m2 0h4m2 0h4m118 0h2m-322 2h2m90 0h2m6 0h2m24 0h2m30 0h8m10 0h2m30 0h2m8 0h2m102 0h2m-226 2h2m22 0h2m8 0h2m26 0h2m2 0h2m38 0h2m46 0h4m68 0h2m-324 2h2m82 0h2m52 0h2m20 0h4m16 0h2m18 0h2m36 0h2m20 0h2m58 0h2m-196 2h4m10 0h2m20 0h2m16 0h4m-94 2h2m10 0h2m2 0h2m18 0h6m8 0h2m20 0h2m20 0h4m-174 2h2m34 0h2m80 0h4m20 0h14m106 0h2m6 0h2m-200 2h4m28 0h2m16 0h2m30 0h2m-162 2h2m76 0h4m30 0h2m12 0h2m158 0h2m-212 2h4m32 0h8m4 0h2m-28 2h2m14 0h4m6 0h4m2 0h2m36 0h8m-88 2h2m8 0h2m10 0h2m2 0h2m2 0h4m4 0h2m22 0h2m14 0h8m-152 2h2m64 0h2m8 0h2m4 0h2m56 0h2m4 0h2m62 0h4m-146 2h2m8 0h2m4 0h2m2 0h4m14 0h2m26 0h2m148 0h2m-258 2h2m2 0h2m28 0h2m12 0h2m4 0h8m14 0h2m4 0h2m58 0h4m110 0h2m12 0h2m-316 2h2m74 0h2m2 0h4m6 0h4m2 0h6m34 0h2m48 0h2m12 0h4m80 0h6m6 0h2m16 0h2m-220 2h2m2 0h2m24 0h4m14 0h2m60 0h2m76 0h8m-218 2h2m22 0h2m6 0h2m2 0h2m8 0h2m4 0h6m8 0h6m54 0h2m16 0h2m10 0h4m50 0h6m-310 2h4m114 0h2m6 0h4m26 0h2m2 0h6m16 0h2m66 0h2m52 0h6m-242 2h2m60 0h2m56 0h2m2 0h2m110 0h6m-290 2h2m64 0h8m14 0h4m20 0h2m20 0h2m2 0h2m126 0h2m18 0h4m-288 2h2m8 0h2m26 0h2m4 0h4m26 0h2m34 0h2m16 0h2m6 0h2m16 0h2m128 0h4m-250 2h6m4 0h2m12 0h2m10 0h4m4 0h4m2 0h2m2 0h2m4 0h2m10 0h2m6 0h6m12 0h2m148 0h4m-236 2h2m8 0h2m10 0h4m2 0h4m2 0h2m28 0h4m20 0h2m18 0h2m-114 2h4m10 0h6m18 0h4m8 0h2m2 0h2m22 0h2m40 0h6m-132 2h2m6 0h2m12 0h4m4 0h2m12 0h4m10 0h2m2 0h2m36 0h4m12 0h4m6 0h8m-164 2h2m26 0h4m14 0h2m18 0h2m2 0h12m6 0h4m2 0h4m32 0h6m10 0h10m-110 2h2m18 0h2m4 0h2m2 0h6m4 0h2m10 0h10m6 0h2m14 0h4m8 0h2m8 0h2m12 0h2m-160 2h2m22 0h4m38 0h6m4 0h2m14 0h2m2 0h2m24 0h2m-102 2h2m20 0h2m18 0h2m4 0h4m18 0h2m4 0h2m16 0h2m-104 2h2m6 0h4m20 0h10m8 0h2m4 0h2m26 0h2m6 0h2m16 0h2m22 0h2m58 0h2m-176 2h2m8 0h4m6 0h6m44 0h2m20 0h2m20 0h2m20 0h2m34 0h2m-226 2h2m50 0h4m20 0h4m10 0h2m48 0h4m132 0h2m10 0h4m-250 2h2m12 0h2m10 0h2m12 0h2m8 0h6m44 0h2m66 0h2m14 0h2m-208 2h2m2 0h2m4 0h6m4 0h2m12 0h2m14 0h2m20 0h4m180 0h2m-254 2h2m8 0h2m2 0h2m12 0h2m2 0h4m2 0h2m-36 2h2m2 0h4m10 0h4m4 0h6m2 0h2m6 0h4m12 0h4m42 0h4m-92 2h2m2 0h2m8 0h2m4 0h8m14 0h2m10 0h4m28 0h2m178 0h2m-262 2h2m6 0h2m8 0h2m2 0h4m10 0h2m2 0h2m2 0h2m2 0h2m14 0h2m-98 2h2m4 0h2m32 0h4m2 0h2m2 0h4m2 0h2m4 0h2m6 0h2m4 0h4m16 0h2m-56 2h6m4 0h2m8 0h2m10 0h6m32 0h2m2 0h4m-112 2h10m26 0h2m6 0h2m8 0h4m2 0h2m4 0h2m8 0h2m6 0h4m2 0h2m8 0h4m6 0h2m46 0h2m34 0h2m-194 2h6m28 0h8m2 0h4m4 0h6m16 0h2m96 0h2m-164 2h2m2 0h2m4 0h2m4 0h6m4 0h6m2 0h4m4 0h8m2 0h4m-48 2h16m4 0h14m4 0h4m6 0h4m-120 2h2m60 0h6m6 0h8m2 0h2m2 0h12m6 0h2m-72 2h2m16 0h6m2 0h4m12 0h2m4 0h8m6 0h4m4 0h4m24 0h2m18 0h2m66 0h2m-228 2h2m56 0h4m4 0h4m8 0h6m2 0h6m10 0h8m138 0h4m-220 2h2m24 0h4m2 0h4m6 0h2m8 0h2m2 0h2m4 0h2m10 0h4m-54 2h2m6 0h2m6 0h4m8 0h2m4 0h2m2 0h2m16 0h4m4 0h2m-66 2h2m2 0h2m2 0h2m4 0h8m16 0h4m12 0h2m42 0h4m-102 2h2m12 0h8m20 0h2m-40 2h2m10 0h6m6 0h2m8 0h6m16 0h2m14 0h2m-78 2h8m8 0h6m6 0h4m10 0h4m2 0h4m24 0h2m74 0h2m-154 2h2m2 0h2m14 0h2m4 0h6m2 0h2m2 0h2m2 0h2m6 0h2m12 0h2m4 0h2m2 0h2m94 0h2m-142 2h6m10 0h2m-64 2h2m48 0h2m12 0h2m44 0h4m-66 2h2m4 0h2m94 0h2m-114 2h2m6 0h2m4 0h6m2 0h4m4 0h2m-38 2h2m14 0h2m2 0h6m48 0h2m-76 2h4m10 0h4m8 0h4m68 0h4m-102 2h4m2 0h4m16 0h2m128 0h2m-154 2h8m4 0h2m8 0h2m2 0h2m18 0h2m-44 2h4m4 0h2m8 0h2m62 0h2m-20 4h2m52 0h2m22 0h2m-184 4h2m34 0h2m116 0h2m-164 2h2m126 0h2m2 2h2m62 0h2m-16 2h2m-206 2h2m8 2h2m144 4h2m-22 2h2m-102 2h4m74 2h2m-40 6h2m108 0h2m40 0h4" stroke="#ff1aff" stroke-width="2" fill="none" shape-rendering="crispEdges"/>
<polygon points="1607,288 1631,294 1649,296 1666,308 1693,304 1730,313 1740,335 1723,344 1685,342 1682,350 1685,357 1702,367 1725,380 1749,376 1752,391 1751,408 1742,433 1742,457 1745,472 1752,491 1740,510 1732,514 1734,526 1758,542 1776,536 1797,542 1805,523 1805,542 1812,560 1810,586 1792,591 1771,609 1745,617 1742,628 1750,646 1755,661 1763,698 1755,734 1745,750 1734,771 1727,800 1727,806 1740,845 1740,876 1750,884 1763,895 1758,910 1732,915 1716,947 1706,978 1682,1007 1667,1033 1664,1051 1660,1061 1635,1073 1636,1081 1609,1090 1587,1092 1566,1101 1566,1113 1571,1125 1580,1128 1569,1137 1554,1150 1560,1162 1545,1177 1527,1174 1522,1178 1510,1185 1505,1204 1496,1204 1467,1221 1449,1212 1431,1194 1432,1174 1415,1165 1418,1160 1431,1139 1434,1124 1441,1127 1460,1110 1464,1125 1473,1125 1469,1108 1464,1098 1452,1087 1444,1093 1438,1087 1432,1075 1426,1070 1421,1066 1388,1066 1380,1040 1372,1027 1349,1014 1333,994 1322,973 1328,941 1341,918 1336,902 1318,897 1298,879 1299,845 1302,819 1286,800 1275,790 1275,773 1283,758 1305,755 1334,744 1348,733 1363,737 1369,733 1379,715 1400,693 1397,680 1424,677 1457,669 1476,658 1458,641 1448,620 1443,602 1427,588 1423,565 1427,547 1420,518 1411,500 1406,489 1387,478 1378,461 1378,448 1393,437 1441,462 1436,457 1435,424 1411,420 1426,391 1440,384 1450,359 1465,327 1480,309 1497,307 1533,313 1565,301" fill="none" stroke="#ffff00" stroke-width="4" stroke-linejoin="round"/>
</svg>
<div class="a" style="left:1968px;top:193px;width:332px;height:1117px;background:#000"></div>
<div class="a" style="left:1980px;top:213px;width:300px;height:100px;background:#e8e9ea;border:2px solid #4a4a4a;overflow:hidden">
  <svg width="296" height="96" viewBox="0 0 296 96" style="position:absolute;left:0;top:0">
   <g fill="#dedcd2" opacity=".7"><path d="M18 12l16 3-3 14-16-3z"/><path d="M47 15l26-4 5 8-24 6z"/><path d="M38 26l22 6 10 25-18 7-16-18z"/><path d="M9 40l13-3 9 13-12 9z"/><path d="M28 60l14-6 11 11-13 12z"/></g>
   <path d="M86 65c3-3 4-8 4-12" stroke="#6f6a66" stroke-width="2.5"/>
   <g fill="none" stroke="#e0d8c0" stroke-width="1.5" opacity=".7"><path d="M207 8c-10 20-12 40-25 50-10 8-20 15-22 30"/></g>
   <g fill="#d8dbdc" opacity=".8"><path d="M260 20l15 15-6 30-20 10-12-20z"/></g>
   <path d="M211 96V14h85" fill="none" stroke="#d62020" stroke-width="2"/>
  </svg>
</div>
<div class="a" style="left:830px;top:1244px;width:187px;height:6px;background:#707272"></div>
<div class="t" style="left:891.5px;top:1260.5px;color:#6a6c6c">2 mm</div>
<div class="t" style="left:2009.5px;top:1217px;color:#fff">31109.34, 3485.05 &#181;m</div>
<div class="t" style="left:2060px;top:1250.5px;color:#fff">235, 237, 236</div>
<!-- viewer border -->
<div class="a" style="left:810px;top:193px;width:1490px;height:1117px;border:5px solid rgba(182,0,0,.5)"></div>

</div>
</body></html>
